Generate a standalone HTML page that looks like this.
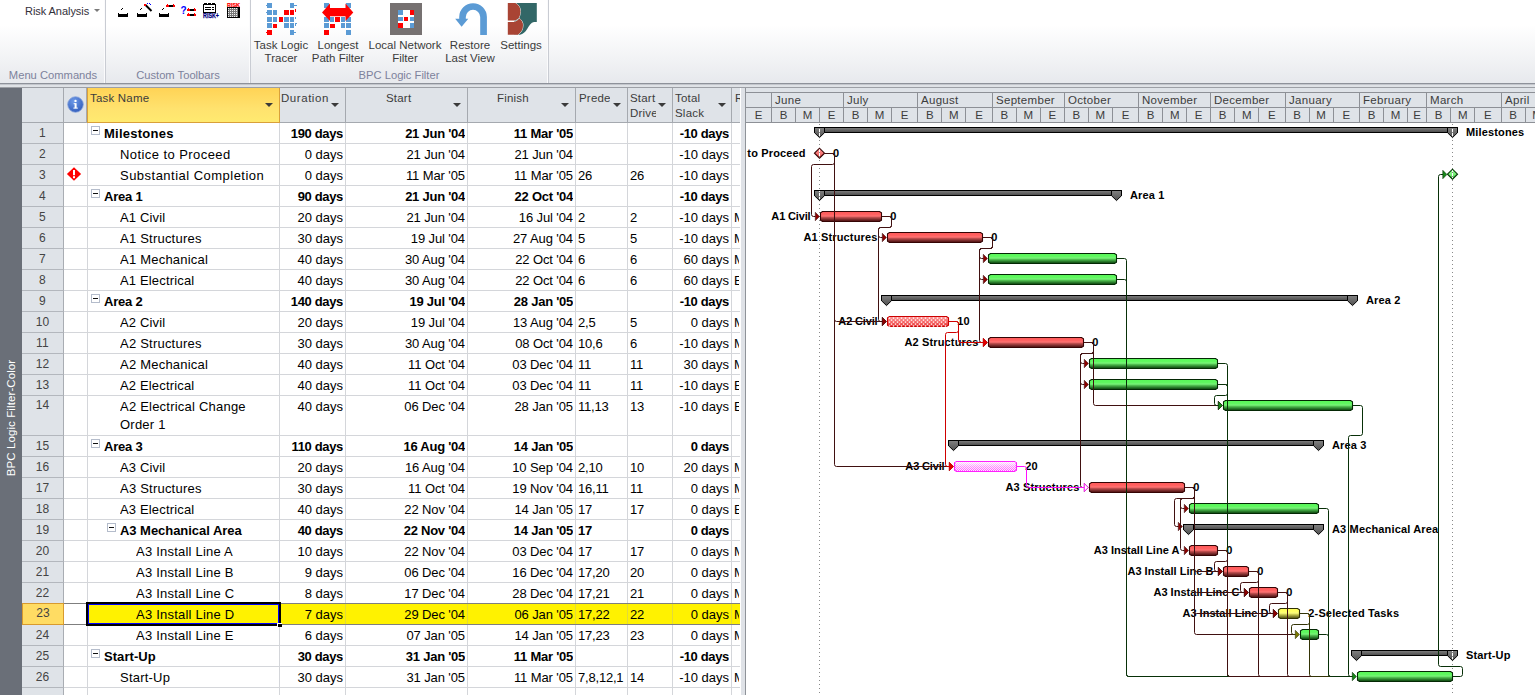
<!DOCTYPE html>
<html><head><meta charset="utf-8"><title>BPC Logic Filter</title>
<style>

html,body{margin:0;padding:0;}
body{width:1535px;height:695px;overflow:hidden;background:#fff;font-family:"Liberation Sans", sans-serif;position:relative;}
div,span{box-sizing:border-box;}
.abs{position:absolute;}
#ribbon{position:absolute;left:0;top:0;width:1535px;height:83px;background:linear-gradient(#ffffff 0%,#ffffff 30%,#f2f3f5 70%,#e7e9ed 100%);}
#ribbon .lbl{position:absolute;font-size:11.5px;color:#3b3b3b;text-align:center;line-height:13px;white-space:nowrap;transform:translateX(-50%);}
#ribbon .grp{position:absolute;font-size:11.2px;color:#7d829c;top:69px;line-height:13px;white-space:nowrap;transform:translateX(-50%);}
.rsep{position:absolute;top:0;width:2px;height:83px;background:linear-gradient(to right,#fbfbfc 0,#fbfbfc 1px,#c9ccd3 1px,#c9ccd3 2px);}
#band{position:absolute;left:0;top:83px;width:1535px;height:5px;background:linear-gradient(#c3c6cc 0,#c3c6cc 1px,#dfe2e6 1px);border-top:1px solid #8e929a;border-bottom:1px solid #9c9fa5;}
#side{position:absolute;left:0;top:88px;width:22px;height:607px;background:#6a6f78;}
#side span{position:absolute;left:11px;top:329.5px;color:#fff;font-size:11.5px;white-space:nowrap;transform:translate(-50%,-50%) rotate(-90deg);letter-spacing:0.1px;}
#tbl{position:absolute;left:22px;top:88px;width:718px;height:607px;background:#fff;overflow:hidden;}
.hc{position:absolute;top:0;height:35px;background:#dfe3e8;border-right:1px solid #a5a9af;border-bottom:1px solid #a5a9af;font-size:11.5px;letter-spacing:0.2px;color:#3c3c3c;line-height:17px;overflow:hidden;white-space:nowrap;}
.hc .t{position:absolute;top:2px;}
.dd{position:absolute;top:15px;width:0;height:0;border-left:4px solid transparent;border-right:4px solid transparent;border-top:4px solid #3a3a3a;}
.rn{position:absolute;left:0;width:42px;background:#dfe3e8;border-right:1px solid #a9adb3;border-bottom:1px solid #b3b7bd;font-size:12px;letter-spacing:0.2px;color:#444;text-align:center;}
.cell{position:absolute;font-size:13px;color:#000;white-space:nowrap;overflow:hidden;line-height:18px;}
.b{font-weight:bold;}
.hl{position:absolute;left:42px;height:1px;background:#d4d6da;width:676px;}
.vl{position:absolute;top:35px;width:1px;background:#d4d6da;height:572px;}
.ob{position:absolute;width:9px;height:9px;border:1px solid #b4bccb;background:#fff;}
.ob i{position:absolute;left:1px;top:3px;width:5px;height:1px;background:#111;}
#gantt{position:absolute;left:746px;top:88px;}

</style></head><body>
<div id="ribbon">
<span class="abs" style="left:25px;top:4px;font-size:11px;color:#33303a;line-height:14px;white-space:nowrap;letter-spacing:-0.05px">Risk Analysis</span>
<div class="abs" style="left:93.5px;top:9px;width:0;height:0;border-left:3px solid transparent;border-right:3px solid transparent;border-top:3.5px solid #7a7a7a"></div>
<div class="rsep" style="left:104px"></div>
<div class="rsep" style="left:249px"></div>
<div class="rsep" style="left:547px"></div>
<span class="grp" style="left:53px">Menu Commands</span>
<span class="grp" style="left:178px">Custom Toolbars</span>
<span class="grp" style="left:399px">BPC Logic Filter</span>
<span class="lbl" style="left:281px;top:39px">Task Logic<br>Tracer</span>
<span class="lbl" style="left:338px;top:39px">Longest<br>Path Filter</span>
<span class="lbl" style="left:405px;top:39px">Local Network<br>Filter</span>
<span class="lbl" style="left:470px;top:39px">Restore<br>Last View</span>
<span class="lbl" style="left:521px;top:39px">Settings<br></span>
<svg class="abs" style="left:0;top:0" width="560" height="42" viewBox="0 0 560 42" shape-rendering="crispEdges">
<rect x="118" y="14" width="10" height="3" fill="#000"/>
<rect x="118" y="13" width="1" height="1" fill="#000"/>
<rect x="127" y="13" width="1" height="1" fill="#000"/>
<rect x="121" y="9" width="1" height="1" fill="#000"/>
<rect x="122" y="8" width="1" height="1" fill="#000"/>
<rect x="137" y="14" width="10" height="3" fill="#000"/>
<rect x="137" y="13" width="1" height="1" fill="#000"/>
<rect x="146" y="13" width="1" height="1" fill="#000"/>
<rect x="140" y="9" width="1" height="1" fill="#000"/>
<rect x="141" y="8" width="1" height="1" fill="#000"/>
<rect x="159" y="14" width="10" height="3" fill="#000"/>
<rect x="159" y="13" width="1" height="1" fill="#000"/>
<rect x="168" y="13" width="1" height="1" fill="#000"/>
<rect x="162" y="9" width="1" height="1" fill="#000"/>
<rect x="163" y="8" width="1" height="1" fill="#000"/>
<path d="M145.5 5 L151.5 11" stroke="#000" stroke-width="2" shape-rendering="auto"/>
<rect x="144" y="4" width="2" height="1.5" fill="#ff0000"/>
<rect x="147" y="3" width="1" height="1" fill="#00f"/>
<rect x="149" y="3" width="1" height="1" fill="#00f"/>
<rect x="150" y="4" width="1" height="1" fill="#00f"/>
<rect x="166" y="5" width="9" height="2" fill="#000"/>
<rect x="166" y="5" width="2.5" height="2" fill="#ff0000"/>
<rect x="172.5" y="5" width="2.5" height="2" fill="#ff0000"/>
<rect x="167" y="4" width="1" height="1" fill="#ff0000"/>
<rect x="173" y="4" width="1" height="1" fill="#ff0000"/>
<text x="180.5" y="13.8" font-family='"Liberation Sans",sans-serif' font-size="10" font-weight="bold" fill="#0000ff" shape-rendering="auto">?</text>
<rect x="187" y="9" width="9" height="2" fill="#000"/>
<rect x="187" y="9" width="2.5" height="2" fill="#ff0000"/>
<rect x="193.5" y="9" width="2.5" height="2" fill="#ff0000"/>
<rect x="188" y="8" width="1" height="1" fill="#ff0000"/>
<rect x="194" y="8" width="1" height="1" fill="#ff0000"/>
<rect x="187" y="14" width="9" height="2" fill="#000"/>
<rect x="187" y="14" width="2.5" height="2" fill="#ff0000"/>
<rect x="193.5" y="14" width="2.5" height="2" fill="#ff0000"/>
<rect x="188" y="13" width="1" height="1" fill="#ff0000"/>
<rect x="194" y="13" width="1" height="1" fill="#ff0000"/>
<rect x="203.5" y="4.5" width="12" height="8" fill="#fff" stroke="#000" stroke-width="1"/>
<rect x="204" y="3" width="3" height="1" fill="#000"/>
<rect x="208" y="3" width="3" height="1" fill="#000"/>
<rect x="212" y="3" width="3" height="1" fill="#000"/>
<rect x="205" y="7" width="6" height="1" fill="#000"/>
<rect x="212" y="7" width="2" height="1" fill="#000"/>
<rect x="205" y="9" width="6" height="1" fill="#000"/>
<rect x="212" y="9" width="2" height="1" fill="#000"/>
<text x="203" y="18" font-family='"Liberation Sans",sans-serif' font-size="6.8" font-weight="bold" fill="#000080" stroke="#000080" stroke-width="0.25" shape-rendering="auto" textLength="16" lengthAdjust="spacingAndGlyphs">RISK+</text>
<text x="227" y="7" font-family='"Liberation Sans",sans-serif' font-size="6" font-weight="bold" fill="#ff0000" stroke="#ff0000" stroke-width="0.25" shape-rendering="auto" textLength="13" lengthAdjust="spacingAndGlyphs">RISK</text>
<rect x="227" y="7" width="13" height="11" fill="#000"/>
<rect x="228" y="8" width="10" height="9" fill="#7a7a7a"/>
<rect x="228" y="8" width="1" height="1" fill="#f4f4f4"/>
<rect x="228" y="10" width="1" height="1" fill="#f4f4f4"/>
<rect x="228" y="12" width="1" height="1" fill="#f4f4f4"/>
<rect x="228" y="14" width="1" height="1" fill="#f4f4f4"/>
<rect x="228" y="16" width="1" height="1" fill="#f4f4f4"/>
<rect x="230" y="8" width="1" height="1" fill="#f4f4f4"/>
<rect x="230" y="10" width="1" height="1" fill="#f4f4f4"/>
<rect x="230" y="12" width="1" height="1" fill="#f4f4f4"/>
<rect x="230" y="14" width="1" height="1" fill="#f4f4f4"/>
<rect x="230" y="16" width="1" height="1" fill="#f4f4f4"/>
<rect x="232" y="8" width="1" height="1" fill="#f4f4f4"/>
<rect x="232" y="10" width="1" height="1" fill="#f4f4f4"/>
<rect x="232" y="12" width="1" height="1" fill="#f4f4f4"/>
<rect x="232" y="14" width="1" height="1" fill="#f4f4f4"/>
<rect x="232" y="16" width="1" height="1" fill="#f4f4f4"/>
<rect x="234" y="8" width="1" height="1" fill="#f4f4f4"/>
<rect x="234" y="10" width="1" height="1" fill="#f4f4f4"/>
<rect x="234" y="12" width="1" height="1" fill="#f4f4f4"/>
<rect x="234" y="14" width="1" height="1" fill="#f4f4f4"/>
<rect x="234" y="16" width="1" height="1" fill="#f4f4f4"/>
<rect x="236" y="8" width="1" height="1" fill="#f4f4f4"/>
<rect x="236" y="10" width="1" height="1" fill="#f4f4f4"/>
<rect x="236" y="12" width="1" height="1" fill="#f4f4f4"/>
<rect x="236" y="14" width="1" height="1" fill="#f4f4f4"/>
<rect x="236" y="16" width="1" height="1" fill="#f4f4f4"/>
<rect x="266.8" y="3" width="5.2" height="4.8" fill="#5b9bd5"/>
<rect x="290.1" y="3" width="3.9" height="4.8" fill="#5b9bd5"/>
<rect x="266.8" y="10" width="5.2" height="4.8" fill="#5b9bd5"/>
<rect x="272.9" y="10" width="3.9" height="4.8" fill="#5b9bd5"/>
<rect x="284" y="10" width="4.7" height="4.8" fill="#ff0000"/>
<rect x="290.1" y="10" width="3.9" height="4.8" fill="#ff0000"/>
<rect x="266.8" y="17" width="5.2" height="4.8" fill="#5b9bd5"/>
<rect x="272.9" y="17" width="3.9" height="4.8" fill="#5b9bd5"/>
<rect x="279" y="17" width="3.9" height="4.8" fill="#ff0000"/>
<rect x="284" y="17" width="4.7" height="4.8" fill="#5b9bd5"/>
<rect x="290.1" y="17" width="3.9" height="4.8" fill="#5b9bd5"/>
<rect x="266.8" y="23.2" width="5.2" height="4.8" fill="#5b9bd5"/>
<rect x="284" y="23.2" width="4.7" height="4.8" fill="#5b9bd5"/>
<rect x="290.1" y="23.2" width="3.9" height="4.8" fill="#5b9bd5"/>
<rect x="266.8" y="30" width="5.2" height="4.8" fill="#ff0000"/>
<rect x="290.1" y="30" width="3.9" height="4.8" fill="#5b9bd5"/>
<rect x="272.6" y="23.6" width="4.4" height="4.2" fill="#ff0000"/>
<rect x="265.8" y="5" width="1.2" height="1" fill="#5b9bd5"/>
<rect x="294" y="5" width="2.8" height="1" fill="#5b9bd5"/>
<rect x="265.5" y="12" width="1.5" height="1" fill="#5b9bd5"/>
<rect x="265.8" y="32" width="1.2" height="1" fill="#ff0000"/>
<rect x="294" y="32" width="2" height="1" fill="#5b9bd5"/>
<rect x="295.5" y="8.5" width="1.2" height="0.8" fill="#ff0000"/>
<rect x="295.3" y="8.5" width="0.7" height="3" fill="#ff0000"/>
<rect x="295.5" y="16.5" width="1.2" height="0.8" fill="#5b9bd5"/>
<rect x="295.3" y="16.5" width="0.7" height="2.5" fill="#5b9bd5"/>
<rect x="295.5" y="23" width="1.2" height="0.8" fill="#5b9bd5"/>
<rect x="295.3" y="23" width="0.7" height="2.5" fill="#5b9bd5"/>
<rect x="324.2" y="3" width="4.7" height="4.8" fill="#5b9bd5"/>
<rect x="346.4" y="3" width="4.3" height="4.8" fill="#5b9bd5"/>
<rect x="324.2" y="17" width="4.7" height="4.8" fill="#5b9bd5"/>
<rect x="330.3" y="17" width="3.6" height="4.8" fill="#5b9bd5"/>
<rect x="335.3" y="17" width="4.7" height="4.8" fill="#ff0000"/>
<rect x="341" y="17" width="3.6" height="4.8" fill="#5b9bd5"/>
<rect x="346.4" y="17" width="4.3" height="4.8" fill="#5b9bd5"/>
<rect x="324.2" y="23.2" width="4.7" height="4.8" fill="#5b9bd5"/>
<rect x="341" y="23.2" width="3.6" height="4.8" fill="#5b9bd5"/>
<rect x="346.4" y="23.2" width="4.3" height="4.8" fill="#5b9bd5"/>
<rect x="324.2" y="30" width="4.7" height="4.8" fill="#ff0000"/>
<rect x="346.4" y="30" width="4.3" height="4.8" fill="#5b9bd5"/>
<rect x="330.3" y="24" width="4.2" height="4" fill="#ff0000"/>
<path d="M322 12.5 L330 3.5 L330 8 L345.5 8 L345.5 3.5 L353.3 12.5 L345.5 21 L345.5 16.3 L330 16.3 L330 21 Z" fill="#ff0000" shape-rendering="auto"/>
<rect x="390" y="3" width="32" height="32" fill="#767171"/>
<rect x="398" y="10" width="16" height="18" fill="#fff"/>
<rect x="398" y="10" width="4.5" height="4.7" fill="#5b9bd5"/>
<rect x="409.5" y="10" width="4.5" height="4.7" fill="#ff0000"/>
<rect x="398" y="16.5" width="4.5" height="4.7" fill="#5b9bd5"/>
<rect x="403.7" y="16.5" width="4.5" height="4.7" fill="#ff0000"/>
<rect x="409.5" y="16.5" width="4.5" height="4.7" fill="#5b9bd5"/>
<rect x="398" y="23" width="4.5" height="4.7" fill="#ff0000"/>
<rect x="409.5" y="23" width="4.5" height="4.7" fill="#5b9bd5"/>
<path d="M480.2 35 L480.2 17 A7.2 7.2 0 0 0 465.8 17 L465.8 18.8 L468.3 18.8 L461.6 26.8 L455.2 18.8 L459.2 18.8 L459.2 17 A13.85 13.85 0 0 1 486.9 17 L486.9 35 Z" fill="#5b9bd5" shape-rendering="auto"/>
<path d="M516.5 3 L536.8 3 L536.8 21.9 L534 22 C531 22.6 529 25.5 527 29.3 C525.3 32 523 34 520 34.8 L514 34.8 L514 3 Z" fill="#326767" shape-rendering="auto"/>
<path d="M507.8 3 L515.2 3 C518.8 4.5 520.6 8 520.4 11.5 C520.3 14 519.8 16 519 17.6 C517.8 19.4 516 20.4 513.8 20.6 L507.8 20.6 Z" fill="#a94434" stroke="#fff" stroke-width="0.9" paint-order="stroke" shape-rendering="auto"/>
<path d="M507.8 22 L513.8 22 C516.2 21.6 518 20.2 519.3 18.4 C521.6 20 523 22.5 523 25.3 C523 29.5 521 32.8 517.8 34.8 L507.8 34.8 Z" fill="#a94434" stroke="#fff" stroke-width="0.9" paint-order="stroke" shape-rendering="auto"/>
<rect x="506" y="2" width="1.8" height="34" fill="#fff" opacity="0"/>
</svg>
</div>
<div id="band"></div>
<div id="side"><span>BPC Logic Filter-Color</span></div>
<div id="tbl">
<div class="hc" style="left:0;width:42px"></div>
<div class="hc" style="left:42px;width:23px"><svg class="abs" style="left:2.6px;top:8.4px" width="17" height="17" viewBox="0 0 17 17"><defs><radialGradient id="ig" cx="0.4" cy="0.3" r="0.8"><stop offset="0" stop-color="#6f9be8"/><stop offset="1" stop-color="#2c57b8"/></radialGradient></defs><circle cx="8.5" cy="8.5" r="7.8" fill="url(#ig)" stroke="#8aa6dc" stroke-width="0.8"/><rect x="7.6" y="7.2" width="2" height="5" fill="#fff"/><rect x="6.6" y="7.2" width="2" height="1" fill="#fff"/><rect x="6.4" y="11.6" width="4.4" height="1" fill="#fff"/><circle cx="8.5" cy="4.9" r="1.2" fill="#fff"/></svg></div>
<div class="hc" style="left:65px;width:193px;background:linear-gradient(#ffd356,#ffe26e 60%,#ffea70);border:1px solid #d9a03a;border-top:none"><span class="t" style="left:2px">Task Name</span><div class="dd" style="left:177px"></div></div>
<div class="hc" style="left:258px;width:66px"><span class="t" style="left:1px;letter-spacing:0.55px">Duration</span><div class="dd" style="left:51px"></div></div>
<div class="hc" style="left:324px;width:122px"><span class="t" style="left:40px">Start</span><div class="dd" style="left:107px"></div></div>
<div class="hc" style="left:446px;width:108px"><span class="t" style="left:29px">Finish</span><div class="dd" style="left:93px"></div></div>
<div class="hc" style="left:554px;width:52px"><span class="t" style="left:3px;width:31px;overflow:hidden">Prede</span><div class="dd" style="left:37px"></div></div>
<div class="hc" style="left:606px;width:45px;line-height:15px"><span class="t" style="left:2px;top:3px;width:26px;overflow:hidden">Start<br>Drive</span><div class="dd" style="left:30px"></div></div>
<div class="hc" style="left:651px;width:59px;line-height:15px"><span class="t" style="left:2px;top:3px">Total<br>Slack</span><div class="dd" style="left:45px"></div></div>
<div class="hc" style="left:710px;width:8px;border-right:none"><span class="t" style="left:3px">R</span></div>
<div class="vl" style="left:65px"></div>
<div class="vl" style="left:257px"></div>
<div class="vl" style="left:323px"></div>
<div class="vl" style="left:445px"></div>
<div class="vl" style="left:553px"></div>
<div class="vl" style="left:605px"></div>
<div class="vl" style="left:650px"></div>
<div class="vl" style="left:709px"></div>
<div class="rn" style="top:35px;height:21px;line-height:20px">1</div>
<div class="hl" style="top:55px"></div>
<div class="ob" style="left:69px;top:38px"><i></i></div>
<div class="cell b" style="left:82px;top:37px;width:175px;letter-spacing:0.25px;line-height:18px;">Milestones</div>
<div class="cell b" style="left:259px;top:37px;width:62px;text-align:right;letter-spacing:-0.35px">190 days</div>
<div class="cell b" style="left:325px;top:37px;width:118px;text-align:right;letter-spacing:-0.25px">21 Jun '04</div>
<div class="cell b" style="left:447px;top:37px;width:104px;text-align:right;letter-spacing:-0.25px">11 Mar '05</div>
<div class="cell b" style="left:652px;top:37px;width:55px;text-align:right;letter-spacing:-0.35px">-10 days</div>
<div class="rn" style="top:56px;height:21px;line-height:20px">2</div>
<div class="hl" style="top:76px"></div>
<div class="cell" style="left:98px;top:58px;width:159px;letter-spacing:0.43px;line-height:18px;">Notice to Proceed</div>
<div class="cell" style="left:259px;top:58px;width:62px;text-align:right;letter-spacing:0px">0 days</div>
<div class="cell" style="left:325px;top:58px;width:118px;text-align:right;letter-spacing:-0.1px">21 Jun '04</div>
<div class="cell" style="left:447px;top:58px;width:104px;text-align:right;letter-spacing:-0.1px">21 Jun '04</div>
<div class="cell" style="left:652px;top:58px;width:55px;text-align:right;letter-spacing:0px">-10 days</div>
<div class="rn" style="top:77px;height:21px;line-height:20px">3</div>
<div class="hl" style="top:97px"></div>
<div class="cell" style="left:98px;top:79px;width:159px;letter-spacing:0.48px;line-height:18px;">Substantial Completion</div>
<div class="cell" style="left:259px;top:79px;width:62px;text-align:right;letter-spacing:0px">0 days</div>
<div class="cell" style="left:325px;top:79px;width:118px;text-align:right;letter-spacing:-0.1px">11 Mar '05</div>
<div class="cell" style="left:447px;top:79px;width:104px;text-align:right;letter-spacing:-0.1px">11 Mar '05</div>
<div class="cell" style="left:556px;top:79px;width:49px;letter-spacing:-0.2px">26</div>
<div class="cell" style="left:608px;top:79px;width:42px;letter-spacing:-0.2px">26</div>
<div class="cell" style="left:652px;top:79px;width:55px;text-align:right;letter-spacing:0px">-10 days</div>
<div class="rn" style="top:98px;height:21px;line-height:20px">4</div>
<div class="hl" style="top:118px"></div>
<div class="ob" style="left:69px;top:101px"><i></i></div>
<div class="cell b" style="left:82px;top:100px;width:175px;letter-spacing:-0.2px;line-height:18px;">Area 1</div>
<div class="cell b" style="left:259px;top:100px;width:62px;text-align:right;letter-spacing:-0.35px">90 days</div>
<div class="cell b" style="left:325px;top:100px;width:118px;text-align:right;letter-spacing:-0.25px">21 Jun '04</div>
<div class="cell b" style="left:447px;top:100px;width:104px;text-align:right;letter-spacing:-0.25px">22 Oct '04</div>
<div class="cell b" style="left:652px;top:100px;width:55px;text-align:right;letter-spacing:-0.35px">-10 days</div>
<div class="rn" style="top:119px;height:21px;line-height:20px">5</div>
<div class="hl" style="top:139px"></div>
<div class="cell" style="left:98px;top:121px;width:159px;letter-spacing:0.14px;line-height:18px;">A1 Civil</div>
<div class="cell" style="left:259px;top:121px;width:62px;text-align:right;letter-spacing:0px">20 days</div>
<div class="cell" style="left:325px;top:121px;width:118px;text-align:right;letter-spacing:-0.1px">21 Jun '04</div>
<div class="cell" style="left:447px;top:121px;width:104px;text-align:right;letter-spacing:-0.1px">16 Jul '04</div>
<div class="cell" style="left:556px;top:121px;width:49px;letter-spacing:-0.2px">2</div>
<div class="cell" style="left:608px;top:121px;width:42px;letter-spacing:-0.2px">2</div>
<div class="cell" style="left:652px;top:121px;width:55px;text-align:right;letter-spacing:0px">-10 days</div>
<div class="cell" style="left:712px;top:121px;width:5px">M</div>
<div class="rn" style="top:140px;height:21px;line-height:20px">6</div>
<div class="hl" style="top:160px"></div>
<div class="cell" style="left:98px;top:142px;width:159px;letter-spacing:0.22px;line-height:18px;">A1 Structures</div>
<div class="cell" style="left:259px;top:142px;width:62px;text-align:right;letter-spacing:0px">30 days</div>
<div class="cell" style="left:325px;top:142px;width:118px;text-align:right;letter-spacing:-0.1px">19 Jul '04</div>
<div class="cell" style="left:447px;top:142px;width:104px;text-align:right;letter-spacing:-0.1px">27 Aug '04</div>
<div class="cell" style="left:556px;top:142px;width:49px;letter-spacing:-0.2px">5</div>
<div class="cell" style="left:608px;top:142px;width:42px;letter-spacing:-0.2px">5</div>
<div class="cell" style="left:652px;top:142px;width:55px;text-align:right;letter-spacing:0px">-10 days</div>
<div class="cell" style="left:712px;top:142px;width:5px">M</div>
<div class="rn" style="top:161px;height:21px;line-height:20px">7</div>
<div class="hl" style="top:181px"></div>
<div class="cell" style="left:98px;top:163px;width:159px;letter-spacing:0.22px;line-height:18px;">A1 Mechanical</div>
<div class="cell" style="left:259px;top:163px;width:62px;text-align:right;letter-spacing:0px">40 days</div>
<div class="cell" style="left:325px;top:163px;width:118px;text-align:right;letter-spacing:-0.1px">30 Aug '04</div>
<div class="cell" style="left:447px;top:163px;width:104px;text-align:right;letter-spacing:-0.1px">22 Oct '04</div>
<div class="cell" style="left:556px;top:163px;width:49px;letter-spacing:-0.2px">6</div>
<div class="cell" style="left:608px;top:163px;width:42px;letter-spacing:-0.2px">6</div>
<div class="cell" style="left:652px;top:163px;width:55px;text-align:right;letter-spacing:0px">60 days</div>
<div class="cell" style="left:712px;top:163px;width:5px">M</div>
<div class="rn" style="top:182px;height:21px;line-height:20px">8</div>
<div class="hl" style="top:202px"></div>
<div class="cell" style="left:98px;top:184px;width:159px;letter-spacing:0.16px;line-height:18px;">A1 Electrical</div>
<div class="cell" style="left:259px;top:184px;width:62px;text-align:right;letter-spacing:0px">40 days</div>
<div class="cell" style="left:325px;top:184px;width:118px;text-align:right;letter-spacing:-0.1px">30 Aug '04</div>
<div class="cell" style="left:447px;top:184px;width:104px;text-align:right;letter-spacing:-0.1px">22 Oct '04</div>
<div class="cell" style="left:556px;top:184px;width:49px;letter-spacing:-0.2px">6</div>
<div class="cell" style="left:608px;top:184px;width:42px;letter-spacing:-0.2px">6</div>
<div class="cell" style="left:652px;top:184px;width:55px;text-align:right;letter-spacing:0px">60 days</div>
<div class="cell" style="left:712px;top:184px;width:5px">E</div>
<div class="rn" style="top:203px;height:21px;line-height:20px">9</div>
<div class="hl" style="top:223px"></div>
<div class="ob" style="left:69px;top:206px"><i></i></div>
<div class="cell b" style="left:82px;top:205px;width:175px;letter-spacing:-0.2px;line-height:18px;">Area 2</div>
<div class="cell b" style="left:259px;top:205px;width:62px;text-align:right;letter-spacing:-0.35px">140 days</div>
<div class="cell b" style="left:325px;top:205px;width:118px;text-align:right;letter-spacing:-0.25px">19 Jul '04</div>
<div class="cell b" style="left:447px;top:205px;width:104px;text-align:right;letter-spacing:-0.25px">28 Jan '05</div>
<div class="cell b" style="left:652px;top:205px;width:55px;text-align:right;letter-spacing:-0.35px">-10 days</div>
<div class="rn" style="top:224px;height:21px;line-height:20px">10</div>
<div class="hl" style="top:244px"></div>
<div class="cell" style="left:98px;top:226px;width:159px;letter-spacing:0.14px;line-height:18px;">A2 Civil</div>
<div class="cell" style="left:259px;top:226px;width:62px;text-align:right;letter-spacing:0px">20 days</div>
<div class="cell" style="left:325px;top:226px;width:118px;text-align:right;letter-spacing:-0.1px">19 Jul '04</div>
<div class="cell" style="left:447px;top:226px;width:104px;text-align:right;letter-spacing:-0.1px">13 Aug '04</div>
<div class="cell" style="left:556px;top:226px;width:49px;letter-spacing:-0.2px">2,5</div>
<div class="cell" style="left:608px;top:226px;width:42px;letter-spacing:-0.2px">5</div>
<div class="cell" style="left:652px;top:226px;width:55px;text-align:right;letter-spacing:0px">0 days</div>
<div class="cell" style="left:712px;top:226px;width:5px">M</div>
<div class="rn" style="top:245px;height:21px;line-height:20px">11</div>
<div class="hl" style="top:265px"></div>
<div class="cell" style="left:98px;top:247px;width:159px;letter-spacing:0.22px;line-height:18px;">A2 Structures</div>
<div class="cell" style="left:259px;top:247px;width:62px;text-align:right;letter-spacing:0px">30 days</div>
<div class="cell" style="left:325px;top:247px;width:118px;text-align:right;letter-spacing:-0.1px">30 Aug '04</div>
<div class="cell" style="left:447px;top:247px;width:104px;text-align:right;letter-spacing:-0.1px">08 Oct '04</div>
<div class="cell" style="left:556px;top:247px;width:49px;letter-spacing:-0.2px">10,6</div>
<div class="cell" style="left:608px;top:247px;width:42px;letter-spacing:-0.2px">6</div>
<div class="cell" style="left:652px;top:247px;width:55px;text-align:right;letter-spacing:0px">-10 days</div>
<div class="cell" style="left:712px;top:247px;width:5px">M</div>
<div class="rn" style="top:266px;height:21px;line-height:20px">12</div>
<div class="hl" style="top:286px"></div>
<div class="cell" style="left:98px;top:268px;width:159px;letter-spacing:0.22px;line-height:18px;">A2 Mechanical</div>
<div class="cell" style="left:259px;top:268px;width:62px;text-align:right;letter-spacing:0px">40 days</div>
<div class="cell" style="left:325px;top:268px;width:118px;text-align:right;letter-spacing:-0.1px">11 Oct '04</div>
<div class="cell" style="left:447px;top:268px;width:104px;text-align:right;letter-spacing:-0.1px">03 Dec '04</div>
<div class="cell" style="left:556px;top:268px;width:49px;letter-spacing:-0.2px">11</div>
<div class="cell" style="left:608px;top:268px;width:42px;letter-spacing:-0.2px">11</div>
<div class="cell" style="left:652px;top:268px;width:55px;text-align:right;letter-spacing:0px">30 days</div>
<div class="cell" style="left:712px;top:268px;width:5px">M</div>
<div class="rn" style="top:287px;height:21px;line-height:20px">13</div>
<div class="hl" style="top:307px"></div>
<div class="cell" style="left:98px;top:289px;width:159px;letter-spacing:0.16px;line-height:18px;">A2 Electrical</div>
<div class="cell" style="left:259px;top:289px;width:62px;text-align:right;letter-spacing:0px">40 days</div>
<div class="cell" style="left:325px;top:289px;width:118px;text-align:right;letter-spacing:-0.1px">11 Oct '04</div>
<div class="cell" style="left:447px;top:289px;width:104px;text-align:right;letter-spacing:-0.1px">03 Dec '04</div>
<div class="cell" style="left:556px;top:289px;width:49px;letter-spacing:-0.2px">11</div>
<div class="cell" style="left:608px;top:289px;width:42px;letter-spacing:-0.2px">11</div>
<div class="cell" style="left:652px;top:289px;width:55px;text-align:right;letter-spacing:0px">-10 days</div>
<div class="cell" style="left:712px;top:289px;width:5px">E</div>
<div class="rn" style="top:308px;height:40px;line-height:19px">14</div>
<div class="hl" style="top:347px"></div>
<div class="cell" style="left:98px;top:310px;width:159px;letter-spacing:0.22px;line-height:18px;white-space:normal;">A2 Electrical Change<br>Order 1</div>
<div class="cell" style="left:259px;top:310px;width:62px;text-align:right;letter-spacing:0px">40 days</div>
<div class="cell" style="left:325px;top:310px;width:118px;text-align:right;letter-spacing:-0.1px">06 Dec '04</div>
<div class="cell" style="left:447px;top:310px;width:104px;text-align:right;letter-spacing:-0.1px">28 Jan '05</div>
<div class="cell" style="left:556px;top:310px;width:49px;letter-spacing:-0.2px">11,13</div>
<div class="cell" style="left:608px;top:310px;width:42px;letter-spacing:-0.2px">13</div>
<div class="cell" style="left:652px;top:310px;width:55px;text-align:right;letter-spacing:0px">-10 days</div>
<div class="cell" style="left:712px;top:310px;width:5px">E</div>
<div class="rn" style="top:348px;height:21px;line-height:20px">15</div>
<div class="hl" style="top:368px"></div>
<div class="ob" style="left:69px;top:351px"><i></i></div>
<div class="cell b" style="left:82px;top:350px;width:175px;letter-spacing:-0.2px;line-height:18px;">Area 3</div>
<div class="cell b" style="left:259px;top:350px;width:62px;text-align:right;letter-spacing:-0.35px">110 days</div>
<div class="cell b" style="left:325px;top:350px;width:118px;text-align:right;letter-spacing:-0.25px">16 Aug '04</div>
<div class="cell b" style="left:447px;top:350px;width:104px;text-align:right;letter-spacing:-0.25px">14 Jan '05</div>
<div class="cell b" style="left:652px;top:350px;width:55px;text-align:right;letter-spacing:-0.35px">0 days</div>
<div class="rn" style="top:369px;height:21px;line-height:20px">16</div>
<div class="hl" style="top:389px"></div>
<div class="cell" style="left:98px;top:371px;width:159px;letter-spacing:0.14px;line-height:18px;">A3 Civil</div>
<div class="cell" style="left:259px;top:371px;width:62px;text-align:right;letter-spacing:0px">20 days</div>
<div class="cell" style="left:325px;top:371px;width:118px;text-align:right;letter-spacing:-0.1px">16 Aug '04</div>
<div class="cell" style="left:447px;top:371px;width:104px;text-align:right;letter-spacing:-0.1px">10 Sep '04</div>
<div class="cell" style="left:556px;top:371px;width:49px;letter-spacing:-0.2px">2,10</div>
<div class="cell" style="left:608px;top:371px;width:42px;letter-spacing:-0.2px">10</div>
<div class="cell" style="left:652px;top:371px;width:55px;text-align:right;letter-spacing:0px">20 days</div>
<div class="cell" style="left:712px;top:371px;width:5px">M</div>
<div class="rn" style="top:390px;height:21px;line-height:20px">17</div>
<div class="hl" style="top:410px"></div>
<div class="cell" style="left:98px;top:392px;width:159px;letter-spacing:0.22px;line-height:18px;">A3 Structures</div>
<div class="cell" style="left:259px;top:392px;width:62px;text-align:right;letter-spacing:0px">30 days</div>
<div class="cell" style="left:325px;top:392px;width:118px;text-align:right;letter-spacing:-0.1px">11 Oct '04</div>
<div class="cell" style="left:447px;top:392px;width:104px;text-align:right;letter-spacing:-0.1px">19 Nov '04</div>
<div class="cell" style="left:556px;top:392px;width:49px;letter-spacing:-0.2px">16,11</div>
<div class="cell" style="left:608px;top:392px;width:42px;letter-spacing:-0.2px">11</div>
<div class="cell" style="left:652px;top:392px;width:55px;text-align:right;letter-spacing:0px">0 days</div>
<div class="cell" style="left:712px;top:392px;width:5px">M</div>
<div class="rn" style="top:411px;height:21px;line-height:20px">18</div>
<div class="hl" style="top:431px"></div>
<div class="cell" style="left:98px;top:413px;width:159px;letter-spacing:0.16px;line-height:18px;">A3 Electrical</div>
<div class="cell" style="left:259px;top:413px;width:62px;text-align:right;letter-spacing:0px">40 days</div>
<div class="cell" style="left:325px;top:413px;width:118px;text-align:right;letter-spacing:-0.1px">22 Nov '04</div>
<div class="cell" style="left:447px;top:413px;width:104px;text-align:right;letter-spacing:-0.1px">14 Jan '05</div>
<div class="cell" style="left:556px;top:413px;width:49px;letter-spacing:-0.2px">17</div>
<div class="cell" style="left:608px;top:413px;width:42px;letter-spacing:-0.2px">17</div>
<div class="cell" style="left:652px;top:413px;width:55px;text-align:right;letter-spacing:0px">0 days</div>
<div class="cell" style="left:712px;top:413px;width:5px">E</div>
<div class="rn" style="top:432px;height:21px;line-height:20px">19</div>
<div class="hl" style="top:452px"></div>
<div class="ob" style="left:85px;top:435px"><i></i></div>
<div class="cell b" style="left:98px;top:434px;width:159px;letter-spacing:-0.04px;line-height:18px;">A3 Mechanical Area</div>
<div class="cell b" style="left:259px;top:434px;width:62px;text-align:right;letter-spacing:-0.35px">40 days</div>
<div class="cell b" style="left:325px;top:434px;width:118px;text-align:right;letter-spacing:-0.25px">22 Nov '04</div>
<div class="cell b" style="left:447px;top:434px;width:104px;text-align:right;letter-spacing:-0.25px">14 Jan '05</div>
<div class="cell b" style="left:556px;top:434px;width:49px;letter-spacing:-0.2px">17</div>
<div class="cell b" style="left:652px;top:434px;width:55px;text-align:right;letter-spacing:-0.35px">0 days</div>
<div class="rn" style="top:453px;height:21px;line-height:20px">20</div>
<div class="hl" style="top:473px"></div>
<div class="cell" style="left:114px;top:455px;width:143px;letter-spacing:0.22px;line-height:18px;">A3 Install Line A</div>
<div class="cell" style="left:259px;top:455px;width:62px;text-align:right;letter-spacing:0px">10 days</div>
<div class="cell" style="left:325px;top:455px;width:118px;text-align:right;letter-spacing:-0.1px">22 Nov '04</div>
<div class="cell" style="left:447px;top:455px;width:104px;text-align:right;letter-spacing:-0.1px">03 Dec '04</div>
<div class="cell" style="left:556px;top:455px;width:49px;letter-spacing:-0.2px">17</div>
<div class="cell" style="left:608px;top:455px;width:42px;letter-spacing:-0.2px">17</div>
<div class="cell" style="left:652px;top:455px;width:55px;text-align:right;letter-spacing:0px">0 days</div>
<div class="cell" style="left:712px;top:455px;width:5px">M</div>
<div class="rn" style="top:474px;height:21px;line-height:20px">21</div>
<div class="hl" style="top:494px"></div>
<div class="cell" style="left:114px;top:476px;width:143px;letter-spacing:0.22px;line-height:18px;">A3 Install Line B</div>
<div class="cell" style="left:259px;top:476px;width:62px;text-align:right;letter-spacing:0px">9 days</div>
<div class="cell" style="left:325px;top:476px;width:118px;text-align:right;letter-spacing:-0.1px">06 Dec '04</div>
<div class="cell" style="left:447px;top:476px;width:104px;text-align:right;letter-spacing:-0.1px">16 Dec '04</div>
<div class="cell" style="left:556px;top:476px;width:49px;letter-spacing:-0.2px">17,20</div>
<div class="cell" style="left:608px;top:476px;width:42px;letter-spacing:-0.2px">20</div>
<div class="cell" style="left:652px;top:476px;width:55px;text-align:right;letter-spacing:0px">0 days</div>
<div class="cell" style="left:712px;top:476px;width:5px">M</div>
<div class="rn" style="top:495px;height:21px;line-height:20px">22</div>
<div class="hl" style="top:515px"></div>
<div class="cell" style="left:114px;top:497px;width:143px;letter-spacing:0.22px;line-height:18px;">A3 Install Line C</div>
<div class="cell" style="left:259px;top:497px;width:62px;text-align:right;letter-spacing:0px">8 days</div>
<div class="cell" style="left:325px;top:497px;width:118px;text-align:right;letter-spacing:-0.1px">17 Dec '04</div>
<div class="cell" style="left:447px;top:497px;width:104px;text-align:right;letter-spacing:-0.1px">28 Dec '04</div>
<div class="cell" style="left:556px;top:497px;width:49px;letter-spacing:-0.2px">17,21</div>
<div class="cell" style="left:608px;top:497px;width:42px;letter-spacing:-0.2px">21</div>
<div class="cell" style="left:652px;top:497px;width:55px;text-align:right;letter-spacing:0px">0 days</div>
<div class="cell" style="left:712px;top:497px;width:5px">M</div>
<div class="rn" style="top:515px;height:22px;line-height:19px;background:#ffdc63;border:1px solid #d89a2e;width:42px">23</div>
<div class="hl" style="top:536px"></div>
<div class="abs" style="left:258px;top:516px;width:460px;height:20px;background:#fff200"></div>
<div class="abs" style="left:323px;top:516px;width:1px;height:20px;background:#e3da3a"></div>
<div class="abs" style="left:445px;top:516px;width:1px;height:20px;background:#e3da3a"></div>
<div class="abs" style="left:553px;top:516px;width:1px;height:20px;background:#e3da3a"></div>
<div class="abs" style="left:605px;top:516px;width:1px;height:20px;background:#e3da3a"></div>
<div class="abs" style="left:650px;top:516px;width:1px;height:20px;background:#e3da3a"></div>
<div class="abs" style="left:709px;top:516px;width:1px;height:20px;background:#e3da3a"></div>
<div class="abs" style="left:42px;top:515px;width:676px;height:1px;background:#7f7f7f"></div>
<div class="abs" style="left:42px;top:536px;width:676px;height:1px;background:#7f7f7f"></div>
<div class="abs" style="left:64px;top:514px;width:195px;height:24px;background:#fff200;border:2px solid #000;box-shadow:inset 0 0 0 1px #0000ff"></div>
<div class="abs" style="left:255px;top:535px;width:5px;height:4px;background:#000;border-top:1px solid #fff;border-left:1px solid #fff"></div>
<div class="cell" style="left:114px;top:518px;width:143px;letter-spacing:0.22px;line-height:18px;">A3 Install Line D</div>
<div class="cell" style="left:259px;top:518px;width:62px;text-align:right;letter-spacing:0px">7 days</div>
<div class="cell" style="left:325px;top:518px;width:118px;text-align:right;letter-spacing:-0.1px">29 Dec '04</div>
<div class="cell" style="left:447px;top:518px;width:104px;text-align:right;letter-spacing:-0.1px">06 Jan '05</div>
<div class="cell" style="left:556px;top:518px;width:49px;letter-spacing:-0.2px">17,22</div>
<div class="cell" style="left:608px;top:518px;width:42px;letter-spacing:-0.2px">22</div>
<div class="cell" style="left:652px;top:518px;width:55px;text-align:right;letter-spacing:0px">0 days</div>
<div class="cell" style="left:712px;top:518px;width:5px">M</div>
<div class="rn" style="top:537px;height:21px;line-height:20px">24</div>
<div class="hl" style="top:557px"></div>
<div class="cell" style="left:114px;top:539px;width:143px;letter-spacing:0.22px;line-height:18px;">A3 Install Line E</div>
<div class="cell" style="left:259px;top:539px;width:62px;text-align:right;letter-spacing:0px">6 days</div>
<div class="cell" style="left:325px;top:539px;width:118px;text-align:right;letter-spacing:-0.1px">07 Jan '05</div>
<div class="cell" style="left:447px;top:539px;width:104px;text-align:right;letter-spacing:-0.1px">14 Jan '05</div>
<div class="cell" style="left:556px;top:539px;width:49px;letter-spacing:-0.2px">17,23</div>
<div class="cell" style="left:608px;top:539px;width:42px;letter-spacing:-0.2px">23</div>
<div class="cell" style="left:652px;top:539px;width:55px;text-align:right;letter-spacing:0px">0 days</div>
<div class="cell" style="left:712px;top:539px;width:5px">M</div>
<div class="rn" style="top:558px;height:21px;line-height:20px">25</div>
<div class="hl" style="top:578px"></div>
<div class="ob" style="left:69px;top:561px"><i></i></div>
<div class="cell b" style="left:82px;top:560px;width:175px;letter-spacing:0.06px;line-height:18px;">Start-Up</div>
<div class="cell b" style="left:259px;top:560px;width:62px;text-align:right;letter-spacing:-0.35px">30 days</div>
<div class="cell b" style="left:325px;top:560px;width:118px;text-align:right;letter-spacing:-0.25px">31 Jan '05</div>
<div class="cell b" style="left:447px;top:560px;width:104px;text-align:right;letter-spacing:-0.25px">11 Mar '05</div>
<div class="cell b" style="left:652px;top:560px;width:55px;text-align:right;letter-spacing:-0.35px">-10 days</div>
<div class="rn" style="top:579px;height:21px;line-height:20px">26</div>
<div class="hl" style="top:599px"></div>
<div class="cell" style="left:98px;top:581px;width:159px;letter-spacing:0.22px;line-height:18px;">Start-Up</div>
<div class="cell" style="left:259px;top:581px;width:62px;text-align:right;letter-spacing:0px">30 days</div>
<div class="cell" style="left:325px;top:581px;width:118px;text-align:right;letter-spacing:-0.1px">31 Jan '05</div>
<div class="cell" style="left:447px;top:581px;width:104px;text-align:right;letter-spacing:-0.1px">11 Mar '05</div>
<div class="cell" style="left:556px;top:581px;width:49px;letter-spacing:-0.2px">7,8,12,1</div>
<div class="cell" style="left:608px;top:581px;width:42px;letter-spacing:-0.2px">14</div>
<div class="cell" style="left:652px;top:581px;width:55px;text-align:right;letter-spacing:0px">-10 days</div>
<div class="cell" style="left:712px;top:581px;width:5px">M</div>
<div class="rn" style="top:600px;height:21px"></div>
<svg class="abs" style="left:44px;top:77.5px" width="16" height="16" viewBox="0 0 16 16"><path d="M8 1.2 L15.1 8 L8 14.8 L0.9 8 Z" fill="#ff0000"/><rect x="7" y="4" width="2" height="5.2" fill="#fff"/><rect x="7" y="10.2" width="2" height="2" fill="#fff"/></svg>
</div>
<div class="abs" style="left:740px;top:88px;width:6px;height:607px;background:#dfe2e7;border-left:1px solid #fff;border-right:1px solid #8f9399"></div>
<svg id="gantt" width="789" height="607" viewBox="746 88 789 607" font-family='"Liberation Sans",sans-serif'>
<defs>
<linearGradient id="gRed" x1="0" y1="0" x2="0" y2="1"><stop offset="0" stop-color="#ff5858"/><stop offset="0.3" stop-color="#ff6262"/><stop offset="0.46" stop-color="#ff7272"/><stop offset="0.6" stop-color="#bc4c4c"/><stop offset="0.8" stop-color="#7a2c2c"/><stop offset="1" stop-color="#440a0a"/></linearGradient>
<linearGradient id="gGreen" x1="0" y1="0" x2="0" y2="1"><stop offset="0" stop-color="#58f858"/><stop offset="0.3" stop-color="#60f760"/><stop offset="0.46" stop-color="#78f478"/><stop offset="0.6" stop-color="#4ebc4e"/><stop offset="0.8" stop-color="#287a2a"/><stop offset="1" stop-color="#0a3a0a"/></linearGradient>
<linearGradient id="gYellow" x1="0" y1="0" x2="0" y2="1"><stop offset="0" stop-color="#ffff58"/><stop offset="0.3" stop-color="#ffff66"/><stop offset="0.46" stop-color="#fbfb7c"/><stop offset="0.6" stop-color="#c8c850"/><stop offset="0.8" stop-color="#84842e"/><stop offset="1" stop-color="#48480c"/></linearGradient>
<linearGradient id="gMsR" x1="0" y1="0" x2="0" y2="1"><stop offset="0" stop-color="#ff9090"/><stop offset="0.5" stop-color="#fa7a7a"/><stop offset="1" stop-color="#d04848"/></linearGradient>
<linearGradient id="gMsG" x1="0" y1="0" x2="0" y2="1"><stop offset="0" stop-color="#98ff98"/><stop offset="0.5" stop-color="#7af07a"/><stop offset="1" stop-color="#48c048"/></linearGradient>
<linearGradient id="gSum" x1="0" y1="0" x2="0" y2="1"><stop offset="0" stop-color="#808080"/><stop offset="1" stop-color="#4a4a4a"/></linearGradient>
<linearGradient id="gCap" x1="0" y1="0" x2="0" y2="1"><stop offset="0" stop-color="#828282"/><stop offset="1" stop-color="#505050"/></linearGradient>
<linearGradient id="gHR" x1="0" y1="0" x2="0" y2="1"><stop offset="0" stop-color="#ff9c9c"/><stop offset="0.5" stop-color="#f86a6a"/><stop offset="1" stop-color="#e63030"/></linearGradient>
<pattern id="hRed" width="4" height="4" patternUnits="userSpaceOnUse"><rect x="0.3" y="0.3" width="1.4" height="1.4" fill="#fff"/><rect x="2.3" y="2.3" width="1.4" height="1.4" fill="#fff"/></pattern>
<pattern id="hMag" width="2" height="2" patternUnits="userSpaceOnUse"><rect width="2" height="2" fill="#ffe6ff"/><rect width="1" height="1" fill="#ff5aff"/><rect x="1" y="1" width="1" height="1" fill="#ff5aff"/></pattern>
<linearGradient id="gHatchFade" x1="0" y1="0" x2="0" y2="1"><stop offset="0" stop-color="#fff" stop-opacity="0.85"/><stop offset="0.5" stop-color="#fff" stop-opacity="0.3"/><stop offset="1" stop-color="#fff" stop-opacity="0"/></linearGradient>
</defs>
<rect x="746" y="88" width="789" height="607" fill="#fff"/>
<rect x="746" y="88" width="789" height="35" fill="#dfe3e8"/>
<line x1="746" y1="92.5" x2="1535" y2="92.5" stroke="#8d9096" stroke-width="1"/>
<line x1="746" y1="107.5" x2="1535" y2="107.5" stroke="#8d9096" stroke-width="1"/>
<line x1="746" y1="122.5" x2="1535" y2="122.5" stroke="#8d9096" stroke-width="1"/>
<text x="758.5" y="118.5" font-size="11.5" fill="#3c3c3c" text-anchor="middle">E</text>
<line x1="771.5" y1="92" x2="771.5" y2="122" stroke="#8d9096" stroke-width="1"/>
<text x="775.0" y="104" font-size="11.5" fill="#3c3c3c" letter-spacing="0.3">June</text>
<text x="783.5" y="118.5" font-size="11.5" fill="#3c3c3c" text-anchor="middle">B</text>
<line x1="795.5" y1="107" x2="795.5" y2="122" stroke="#8d9096" stroke-width="1"/>
<text x="807.5" y="118.5" font-size="11.5" fill="#3c3c3c" text-anchor="middle">M</text>
<line x1="819.5" y1="107" x2="819.5" y2="122" stroke="#8d9096" stroke-width="1"/>
<text x="831.5" y="118.5" font-size="11.5" fill="#3c3c3c" text-anchor="middle">E</text>
<line x1="843.5" y1="92" x2="843.5" y2="122" stroke="#8d9096" stroke-width="1"/>
<text x="847.0" y="104" font-size="11.5" fill="#3c3c3c" letter-spacing="0.3">July</text>
<text x="855.5" y="118.5" font-size="11.5" fill="#3c3c3c" text-anchor="middle">B</text>
<line x1="867.5" y1="107" x2="867.5" y2="122" stroke="#8d9096" stroke-width="1"/>
<text x="879.5" y="118.5" font-size="11.5" fill="#3c3c3c" text-anchor="middle">M</text>
<line x1="891.5" y1="107" x2="891.5" y2="122" stroke="#8d9096" stroke-width="1"/>
<text x="904.7" y="118.5" font-size="11.5" fill="#3c3c3c" text-anchor="middle">E</text>
<line x1="917.5" y1="92" x2="917.5" y2="122" stroke="#8d9096" stroke-width="1"/>
<text x="921.0" y="104" font-size="11.5" fill="#3c3c3c" letter-spacing="0.3">August</text>
<text x="929.9" y="118.5" font-size="11.5" fill="#3c3c3c" text-anchor="middle">B</text>
<line x1="941.5" y1="107" x2="941.5" y2="122" stroke="#8d9096" stroke-width="1"/>
<text x="953.9" y="118.5" font-size="11.5" fill="#3c3c3c" text-anchor="middle">M</text>
<line x1="965.5" y1="107" x2="965.5" y2="122" stroke="#8d9096" stroke-width="1"/>
<text x="979.1" y="118.5" font-size="11.5" fill="#3c3c3c" text-anchor="middle">E</text>
<line x1="992.5" y1="92" x2="992.5" y2="122" stroke="#8d9096" stroke-width="1"/>
<text x="996.0" y="104" font-size="11.5" fill="#3c3c3c" letter-spacing="0.3">September</text>
<text x="1004.3" y="118.5" font-size="11.5" fill="#3c3c3c" text-anchor="middle">B</text>
<line x1="1016.5" y1="107" x2="1016.5" y2="122" stroke="#8d9096" stroke-width="1"/>
<text x="1028.3" y="118.5" font-size="11.5" fill="#3c3c3c" text-anchor="middle">M</text>
<line x1="1040.5" y1="107" x2="1040.5" y2="122" stroke="#8d9096" stroke-width="1"/>
<text x="1052.3" y="118.5" font-size="11.5" fill="#3c3c3c" text-anchor="middle">E</text>
<line x1="1064.5" y1="92" x2="1064.5" y2="122" stroke="#8d9096" stroke-width="1"/>
<text x="1068.0" y="104" font-size="11.5" fill="#3c3c3c" letter-spacing="0.3">October</text>
<text x="1076.3" y="118.5" font-size="11.5" fill="#3c3c3c" text-anchor="middle">B</text>
<line x1="1088.5" y1="107" x2="1088.5" y2="122" stroke="#8d9096" stroke-width="1"/>
<text x="1100.3" y="118.5" font-size="11.5" fill="#3c3c3c" text-anchor="middle">M</text>
<line x1="1112.5" y1="107" x2="1112.5" y2="122" stroke="#8d9096" stroke-width="1"/>
<text x="1125.5" y="118.5" font-size="11.5" fill="#3c3c3c" text-anchor="middle">E</text>
<line x1="1138.5" y1="92" x2="1138.5" y2="122" stroke="#8d9096" stroke-width="1"/>
<text x="1142.0" y="104" font-size="11.5" fill="#3c3c3c" letter-spacing="0.3">November</text>
<text x="1150.7" y="118.5" font-size="11.5" fill="#3c3c3c" text-anchor="middle">B</text>
<line x1="1162.5" y1="107" x2="1162.5" y2="122" stroke="#8d9096" stroke-width="1"/>
<text x="1174.7" y="118.5" font-size="11.5" fill="#3c3c3c" text-anchor="middle">M</text>
<line x1="1186.5" y1="107" x2="1186.5" y2="122" stroke="#8d9096" stroke-width="1"/>
<text x="1198.7" y="118.5" font-size="11.5" fill="#3c3c3c" text-anchor="middle">E</text>
<line x1="1210.5" y1="92" x2="1210.5" y2="122" stroke="#8d9096" stroke-width="1"/>
<text x="1214.0" y="104" font-size="11.5" fill="#3c3c3c" letter-spacing="0.3">December</text>
<text x="1222.7" y="118.5" font-size="11.5" fill="#3c3c3c" text-anchor="middle">B</text>
<line x1="1234.5" y1="107" x2="1234.5" y2="122" stroke="#8d9096" stroke-width="1"/>
<text x="1246.7" y="118.5" font-size="11.5" fill="#3c3c3c" text-anchor="middle">M</text>
<line x1="1258.5" y1="107" x2="1258.5" y2="122" stroke="#8d9096" stroke-width="1"/>
<text x="1271.9" y="118.5" font-size="11.5" fill="#3c3c3c" text-anchor="middle">E</text>
<line x1="1285.5" y1="92" x2="1285.5" y2="122" stroke="#8d9096" stroke-width="1"/>
<text x="1289.0" y="104" font-size="11.5" fill="#3c3c3c" letter-spacing="0.3">January</text>
<text x="1297.1" y="118.5" font-size="11.5" fill="#3c3c3c" text-anchor="middle">B</text>
<line x1="1309.5" y1="107" x2="1309.5" y2="122" stroke="#8d9096" stroke-width="1"/>
<text x="1321.1" y="118.5" font-size="11.5" fill="#3c3c3c" text-anchor="middle">M</text>
<line x1="1333.5" y1="107" x2="1333.5" y2="122" stroke="#8d9096" stroke-width="1"/>
<text x="1346.3" y="118.5" font-size="11.5" fill="#3c3c3c" text-anchor="middle">E</text>
<line x1="1359.5" y1="92" x2="1359.5" y2="122" stroke="#8d9096" stroke-width="1"/>
<text x="1363.0" y="104" font-size="11.5" fill="#3c3c3c" letter-spacing="0.3">February</text>
<text x="1371.5" y="118.5" font-size="11.5" fill="#3c3c3c" text-anchor="middle">B</text>
<line x1="1383.5" y1="107" x2="1383.5" y2="122" stroke="#8d9096" stroke-width="1"/>
<text x="1395.5" y="118.5" font-size="11.5" fill="#3c3c3c" text-anchor="middle">M</text>
<line x1="1407.5" y1="107" x2="1407.5" y2="122" stroke="#8d9096" stroke-width="1"/>
<text x="1417.1" y="118.5" font-size="11.5" fill="#3c3c3c" text-anchor="middle">E</text>
<line x1="1426.5" y1="92" x2="1426.5" y2="122" stroke="#8d9096" stroke-width="1"/>
<text x="1430.0" y="104" font-size="11.5" fill="#3c3c3c" letter-spacing="0.3">March</text>
<text x="1438.7" y="118.5" font-size="11.5" fill="#3c3c3c" text-anchor="middle">B</text>
<line x1="1450.5" y1="107" x2="1450.5" y2="122" stroke="#8d9096" stroke-width="1"/>
<text x="1462.7" y="118.5" font-size="11.5" fill="#3c3c3c" text-anchor="middle">M</text>
<line x1="1474.5" y1="107" x2="1474.5" y2="122" stroke="#8d9096" stroke-width="1"/>
<text x="1487.9" y="118.5" font-size="11.5" fill="#3c3c3c" text-anchor="middle">E</text>
<line x1="1501.5" y1="92" x2="1501.5" y2="122" stroke="#8d9096" stroke-width="1"/>
<text x="1505.0" y="104" font-size="11.5" fill="#3c3c3c" letter-spacing="0.3">April</text>
<text x="1513.1" y="118.5" font-size="11.5" fill="#3c3c3c" text-anchor="middle">B</text>
<line x1="1525.5" y1="107" x2="1525.5" y2="122" stroke="#8d9096" stroke-width="1"/>
<text x="1537.1" y="118.5" font-size="11.5" fill="#3c3c3c" text-anchor="middle">M</text>
<line x1="1549.5" y1="107" x2="1549.5" y2="122" stroke="#8d9096" stroke-width="1"/>
<text x="1561.1" y="118.5" font-size="11.5" fill="#3c3c3c" text-anchor="middle">E</text>
<line x1="819.5" y1="124" x2="819.5" y2="695" stroke="#8a8a8a" stroke-width="1" stroke-dasharray="1 3"/>
<line x1="1452.5" y1="124" x2="1452.5" y2="695" stroke="#8a8a8a" stroke-width="1" stroke-dasharray="1 3"/>
<rect x="814.5" y="127.5" width="643.0" height="5" fill="url(#gSum)" stroke="#000" stroke-width="1"/>
<path d="M814.5 127.5 L824.5 127.5 L824.5 132.7 L819.5 137.6 L814.5 132.7 Z" fill="url(#gCap)" stroke="#000" stroke-width="1" stroke-linejoin="miter"/>
<path d="M1447.5 127.5 L1457.5 127.5 L1457.5 132.7 L1452.5 137.6 L1447.5 132.7 Z" fill="url(#gCap)" stroke="#000" stroke-width="1" stroke-linejoin="miter"/>
<text x="1466" y="135.9" font-size="11" font-weight="bold" fill="#000" letter-spacing="0.15">Milestones</text>
<path d="M814.5 153.2 L819.5 148.2 L824.5 153.2 L819.5 158.2 Z" fill="url(#gMsR)" stroke="#3a0606" stroke-width="1.15"/>
<line x1="824.5" y1="153.5" x2="834" y2="153.5" stroke="#401010" stroke-width="1"/>
<text x="805.7" y="156.9" text-anchor="end" font-size="11" font-weight="bold" fill="#000" letter-spacing="0.15">Notice to Proceed</text>
<text x="833" y="156.9" font-size="11" font-weight="bold" fill="#000" letter-spacing="0.15">0</text>
<path d="M1447.5 174.2 L1452.5 169.2 L1457.5 174.2 L1452.5 179.2 Z" fill="url(#gMsG)" stroke="#063a06" stroke-width="1.15"/>
<rect x="814.5" y="190.5" width="307.0" height="5" fill="url(#gSum)" stroke="#000" stroke-width="1"/>
<path d="M814.5 190.5 L824.5 190.5 L824.5 195.7 L819.5 200.6 L814.5 195.7 Z" fill="url(#gCap)" stroke="#000" stroke-width="1" stroke-linejoin="miter"/>
<path d="M1111.5 190.5 L1121.5 190.5 L1121.5 195.7 L1116.5 200.6 L1111.5 195.7 Z" fill="url(#gCap)" stroke="#000" stroke-width="1" stroke-linejoin="miter"/>
<text x="1130" y="198.9" font-size="11" font-weight="bold" fill="#000" letter-spacing="0.15">Area 1</text>
<path d="M822.5 211.5 L879.5 211.5 L881.5 212.8 L881.5 220.2 L879.5 221.5 L822.5 221.5 L820.5 220.2 L820.5 212.8 Z" fill="url(#gRed)" stroke="#340404" stroke-width="1.1"/>
<text x="810.5" y="219.9" text-anchor="end" font-size="11" font-weight="bold" fill="#000" letter-spacing="-0.15">A1 Civil</text>
<text x="890.3" y="219.9" font-size="11" font-weight="bold" fill="#000" letter-spacing="0.15">0</text>
<path d="M889.5 232.5 L980.5 232.5 L982.5 233.8 L982.5 241.2 L980.5 242.5 L889.5 242.5 L887.5 241.2 L887.5 233.8 Z" fill="url(#gRed)" stroke="#340404" stroke-width="1.1"/>
<text x="877.5" y="240.9" text-anchor="end" font-size="11" font-weight="bold" fill="#000" letter-spacing="0.15">A1 Structures</text>
<text x="991.3" y="240.9" font-size="11" font-weight="bold" fill="#000" letter-spacing="0.15">0</text>
<path d="M990.5 253.5 L1114.5 253.5 L1116.5 254.8 L1116.5 262.2 L1114.5 263.5 L990.5 263.5 L988.5 262.2 L988.5 254.8 Z" fill="url(#gGreen)" stroke="#042804" stroke-width="1.1"/>
<path d="M990.5 274.5 L1114.5 274.5 L1116.5 275.8 L1116.5 283.2 L1114.5 284.5 L990.5 284.5 L988.5 283.2 L988.5 275.8 Z" fill="url(#gGreen)" stroke="#042804" stroke-width="1.1"/>
<rect x="881.5" y="295.5" width="476.0" height="5" fill="url(#gSum)" stroke="#000" stroke-width="1"/>
<path d="M881.5 295.5 L891.5 295.5 L891.5 300.7 L886.5 305.6 L881.5 300.7 Z" fill="url(#gCap)" stroke="#000" stroke-width="1" stroke-linejoin="miter"/>
<path d="M1347.5 295.5 L1357.5 295.5 L1357.5 300.7 L1352.5 305.6 L1347.5 300.7 Z" fill="url(#gCap)" stroke="#000" stroke-width="1" stroke-linejoin="miter"/>
<text x="1366" y="303.9" font-size="11" font-weight="bold" fill="#000" letter-spacing="0.15">Area 2</text>
<path d="M889.5 316.5 L946.5 316.5 L948.5 317.8 L948.5 325.2 L946.5 326.5 L889.5 326.5 L887.5 325.2 L887.5 317.8 Z" fill="url(#gHR)" stroke="#cc0000" stroke-width="1.1"/>
<rect x="888.8" y="317.4" width="1.4" height="1.4" fill="#fff" fill-opacity="0.95"/>
<rect x="890.8" y="319.4" width="1.4" height="1.4" fill="#fff" fill-opacity="0.95"/>
<rect x="888.8" y="321.4" width="1.4" height="1.4" fill="#fff" fill-opacity="0.95"/>
<rect x="890.8" y="323.4" width="1.4" height="1.4" fill="#fff" fill-opacity="0.95"/>
<rect x="888.8" y="325.3" width="1.4" height="1.4" fill="#fff" fill-opacity="0.95"/>
<rect x="892.8" y="317.4" width="1.4" height="1.4" fill="#fff" fill-opacity="0.95"/>
<rect x="894.8" y="319.4" width="1.4" height="1.4" fill="#fff" fill-opacity="0.95"/>
<rect x="892.8" y="321.4" width="1.4" height="1.4" fill="#fff" fill-opacity="0.95"/>
<rect x="894.8" y="323.4" width="1.4" height="1.4" fill="#fff" fill-opacity="0.95"/>
<rect x="892.8" y="325.3" width="1.4" height="1.4" fill="#fff" fill-opacity="0.95"/>
<rect x="896.8" y="317.4" width="1.4" height="1.4" fill="#fff" fill-opacity="0.95"/>
<rect x="898.8" y="319.4" width="1.4" height="1.4" fill="#fff" fill-opacity="0.95"/>
<rect x="896.8" y="321.4" width="1.4" height="1.4" fill="#fff" fill-opacity="0.95"/>
<rect x="898.8" y="323.4" width="1.4" height="1.4" fill="#fff" fill-opacity="0.95"/>
<rect x="896.8" y="325.3" width="1.4" height="1.4" fill="#fff" fill-opacity="0.95"/>
<rect x="900.8" y="317.4" width="1.4" height="1.4" fill="#fff" fill-opacity="0.95"/>
<rect x="902.8" y="319.4" width="1.4" height="1.4" fill="#fff" fill-opacity="0.95"/>
<rect x="900.8" y="321.4" width="1.4" height="1.4" fill="#fff" fill-opacity="0.95"/>
<rect x="902.8" y="323.4" width="1.4" height="1.4" fill="#fff" fill-opacity="0.95"/>
<rect x="900.8" y="325.3" width="1.4" height="1.4" fill="#fff" fill-opacity="0.95"/>
<rect x="904.8" y="317.4" width="1.4" height="1.4" fill="#fff" fill-opacity="0.95"/>
<rect x="906.8" y="319.4" width="1.4" height="1.4" fill="#fff" fill-opacity="0.95"/>
<rect x="904.8" y="321.4" width="1.4" height="1.4" fill="#fff" fill-opacity="0.95"/>
<rect x="906.8" y="323.4" width="1.4" height="1.4" fill="#fff" fill-opacity="0.95"/>
<rect x="904.8" y="325.3" width="1.4" height="1.4" fill="#fff" fill-opacity="0.95"/>
<rect x="908.8" y="317.4" width="1.4" height="1.4" fill="#fff" fill-opacity="0.95"/>
<rect x="910.8" y="319.4" width="1.4" height="1.4" fill="#fff" fill-opacity="0.95"/>
<rect x="908.8" y="321.4" width="1.4" height="1.4" fill="#fff" fill-opacity="0.95"/>
<rect x="910.8" y="323.4" width="1.4" height="1.4" fill="#fff" fill-opacity="0.95"/>
<rect x="908.8" y="325.3" width="1.4" height="1.4" fill="#fff" fill-opacity="0.95"/>
<rect x="912.8" y="317.4" width="1.4" height="1.4" fill="#fff" fill-opacity="0.95"/>
<rect x="914.8" y="319.4" width="1.4" height="1.4" fill="#fff" fill-opacity="0.95"/>
<rect x="912.8" y="321.4" width="1.4" height="1.4" fill="#fff" fill-opacity="0.95"/>
<rect x="914.8" y="323.4" width="1.4" height="1.4" fill="#fff" fill-opacity="0.95"/>
<rect x="912.8" y="325.3" width="1.4" height="1.4" fill="#fff" fill-opacity="0.95"/>
<rect x="916.8" y="317.4" width="1.4" height="1.4" fill="#fff" fill-opacity="0.95"/>
<rect x="918.8" y="319.4" width="1.4" height="1.4" fill="#fff" fill-opacity="0.95"/>
<rect x="916.8" y="321.4" width="1.4" height="1.4" fill="#fff" fill-opacity="0.95"/>
<rect x="918.8" y="323.4" width="1.4" height="1.4" fill="#fff" fill-opacity="0.95"/>
<rect x="916.8" y="325.3" width="1.4" height="1.4" fill="#fff" fill-opacity="0.95"/>
<rect x="920.8" y="317.4" width="1.4" height="1.4" fill="#fff" fill-opacity="0.95"/>
<rect x="922.8" y="319.4" width="1.4" height="1.4" fill="#fff" fill-opacity="0.95"/>
<rect x="920.8" y="321.4" width="1.4" height="1.4" fill="#fff" fill-opacity="0.95"/>
<rect x="922.8" y="323.4" width="1.4" height="1.4" fill="#fff" fill-opacity="0.95"/>
<rect x="920.8" y="325.3" width="1.4" height="1.4" fill="#fff" fill-opacity="0.95"/>
<rect x="924.8" y="317.4" width="1.4" height="1.4" fill="#fff" fill-opacity="0.95"/>
<rect x="926.8" y="319.4" width="1.4" height="1.4" fill="#fff" fill-opacity="0.95"/>
<rect x="924.8" y="321.4" width="1.4" height="1.4" fill="#fff" fill-opacity="0.95"/>
<rect x="926.8" y="323.4" width="1.4" height="1.4" fill="#fff" fill-opacity="0.95"/>
<rect x="924.8" y="325.3" width="1.4" height="1.4" fill="#fff" fill-opacity="0.95"/>
<rect x="928.8" y="317.4" width="1.4" height="1.4" fill="#fff" fill-opacity="0.95"/>
<rect x="930.8" y="319.4" width="1.4" height="1.4" fill="#fff" fill-opacity="0.95"/>
<rect x="928.8" y="321.4" width="1.4" height="1.4" fill="#fff" fill-opacity="0.95"/>
<rect x="930.8" y="323.4" width="1.4" height="1.4" fill="#fff" fill-opacity="0.95"/>
<rect x="928.8" y="325.3" width="1.4" height="1.4" fill="#fff" fill-opacity="0.95"/>
<rect x="932.8" y="317.4" width="1.4" height="1.4" fill="#fff" fill-opacity="0.95"/>
<rect x="934.8" y="319.4" width="1.4" height="1.4" fill="#fff" fill-opacity="0.95"/>
<rect x="932.8" y="321.4" width="1.4" height="1.4" fill="#fff" fill-opacity="0.95"/>
<rect x="934.8" y="323.4" width="1.4" height="1.4" fill="#fff" fill-opacity="0.95"/>
<rect x="932.8" y="325.3" width="1.4" height="1.4" fill="#fff" fill-opacity="0.95"/>
<rect x="936.8" y="317.4" width="1.4" height="1.4" fill="#fff" fill-opacity="0.95"/>
<rect x="938.8" y="319.4" width="1.4" height="1.4" fill="#fff" fill-opacity="0.95"/>
<rect x="936.8" y="321.4" width="1.4" height="1.4" fill="#fff" fill-opacity="0.95"/>
<rect x="938.8" y="323.4" width="1.4" height="1.4" fill="#fff" fill-opacity="0.95"/>
<rect x="936.8" y="325.3" width="1.4" height="1.4" fill="#fff" fill-opacity="0.95"/>
<rect x="940.8" y="317.4" width="1.4" height="1.4" fill="#fff" fill-opacity="0.95"/>
<rect x="942.8" y="319.4" width="1.4" height="1.4" fill="#fff" fill-opacity="0.95"/>
<rect x="940.8" y="321.4" width="1.4" height="1.4" fill="#fff" fill-opacity="0.95"/>
<rect x="942.8" y="323.4" width="1.4" height="1.4" fill="#fff" fill-opacity="0.95"/>
<rect x="940.8" y="325.3" width="1.4" height="1.4" fill="#fff" fill-opacity="0.95"/>
<rect x="944.8" y="317.4" width="1.4" height="1.4" fill="#fff" fill-opacity="0.95"/>
<rect x="944.8" y="321.4" width="1.4" height="1.4" fill="#fff" fill-opacity="0.95"/>
<rect x="944.8" y="325.3" width="1.4" height="1.4" fill="#fff" fill-opacity="0.95"/>
<text x="877.5" y="324.9" text-anchor="end" font-size="11" font-weight="bold" fill="#000" letter-spacing="-0.15">A2 Civil</text>
<text x="957.3" y="324.9" font-size="11" font-weight="bold" fill="#000" letter-spacing="0.15">10</text>
<path d="M990.5 337.5 L1081.5 337.5 L1083.5 338.8 L1083.5 346.2 L1081.5 347.5 L990.5 347.5 L988.5 346.2 L988.5 338.8 Z" fill="url(#gRed)" stroke="#340404" stroke-width="1.1"/>
<text x="978.5" y="345.9" text-anchor="end" font-size="11" font-weight="bold" fill="#000" letter-spacing="0.15">A2 Structures</text>
<text x="1092.3" y="345.9" font-size="11" font-weight="bold" fill="#000" letter-spacing="0.15">0</text>
<path d="M1091.5 358.5 L1215.5 358.5 L1217.5 359.8 L1217.5 367.2 L1215.5 368.5 L1091.5 368.5 L1089.5 367.2 L1089.5 359.8 Z" fill="url(#gGreen)" stroke="#042804" stroke-width="1.1"/>
<path d="M1091.5 379.5 L1215.5 379.5 L1217.5 380.8 L1217.5 388.2 L1215.5 389.5 L1091.5 389.5 L1089.5 388.2 L1089.5 380.8 Z" fill="url(#gGreen)" stroke="#042804" stroke-width="1.1"/>
<path d="M1225.5 400.5 L1350.5 400.5 L1352.5 401.8 L1352.5 409.2 L1350.5 410.5 L1225.5 410.5 L1223.5 409.2 L1223.5 401.8 Z" fill="url(#gGreen)" stroke="#042804" stroke-width="1.1"/>
<rect x="948.5" y="440.5" width="375.0" height="5" fill="url(#gSum)" stroke="#000" stroke-width="1"/>
<path d="M948.5 440.5 L958.5 440.5 L958.5 445.7 L953.5 450.6 L948.5 445.7 Z" fill="url(#gCap)" stroke="#000" stroke-width="1" stroke-linejoin="miter"/>
<path d="M1313.5 440.5 L1323.5 440.5 L1323.5 445.7 L1318.5 450.6 L1313.5 445.7 Z" fill="url(#gCap)" stroke="#000" stroke-width="1" stroke-linejoin="miter"/>
<text x="1332" y="448.9" font-size="11" font-weight="bold" fill="#000" letter-spacing="0.15">Area 3</text>
<path d="M956.5 461.5 L1014.5 461.5 L1016.5 462.8 L1016.5 470.2 L1014.5 471.5 L956.5 471.5 L954.5 470.2 L954.5 462.8 Z" fill="url(#hMag)" stroke="#ff20ff" stroke-width="1.1"/>
<rect x="955.5" y="462" width="60.0" height="9" fill="url(#gHatchFade)"/>
<text x="944.5" y="469.9" text-anchor="end" font-size="11" font-weight="bold" fill="#000" letter-spacing="-0.15">A3 Civil</text>
<text x="1025.3" y="469.9" font-size="11" font-weight="bold" fill="#000" letter-spacing="0.15">20</text>
<path d="M1091.5 482.5 L1182.5 482.5 L1184.5 483.8 L1184.5 491.2 L1182.5 492.5 L1091.5 492.5 L1089.5 491.2 L1089.5 483.8 Z" fill="url(#gRed)" stroke="#340404" stroke-width="1.1"/>
<text x="1079.5" y="490.9" text-anchor="end" font-size="11" font-weight="bold" fill="#000" letter-spacing="0.15">A3 Structures</text>
<text x="1193.3" y="490.9" font-size="11" font-weight="bold" fill="#000" letter-spacing="0.15">0</text>
<path d="M1191.5 503.5 L1316.5 503.5 L1318.5 504.8 L1318.5 512.2 L1316.5 513.5 L1191.5 513.5 L1189.5 512.2 L1189.5 504.8 Z" fill="url(#gGreen)" stroke="#042804" stroke-width="1.1"/>
<rect x="1183.5" y="524.5" width="140.0" height="5" fill="url(#gSum)" stroke="#000" stroke-width="1"/>
<path d="M1183.5 524.5 L1193.5 524.5 L1193.5 529.7 L1188.5 534.6 L1183.5 529.7 Z" fill="url(#gCap)" stroke="#000" stroke-width="1" stroke-linejoin="miter"/>
<path d="M1313.5 524.5 L1323.5 524.5 L1323.5 529.7 L1318.5 534.6 L1313.5 529.7 Z" fill="url(#gCap)" stroke="#000" stroke-width="1" stroke-linejoin="miter"/>
<text x="1332" y="532.9" font-size="11" font-weight="bold" fill="#000" letter-spacing="0.15">A3 Mechanical Area</text>
<path d="M1191.5 545.5 L1215.5 545.5 L1217.5 546.8 L1217.5 554.2 L1215.5 555.5 L1191.5 555.5 L1189.5 554.2 L1189.5 546.8 Z" fill="url(#gRed)" stroke="#340404" stroke-width="1.1"/>
<text x="1179.5" y="553.9" text-anchor="end" font-size="11" font-weight="bold" fill="#000" letter-spacing="0.03">A3 Install Line A</text>
<text x="1226.3" y="553.9" font-size="11" font-weight="bold" fill="#000" letter-spacing="0.15">0</text>
<path d="M1225.5 566.5 L1246.5 566.5 L1248.5 567.8 L1248.5 575.2 L1246.5 576.5 L1225.5 576.5 L1223.5 575.2 L1223.5 567.8 Z" fill="url(#gRed)" stroke="#340404" stroke-width="1.1"/>
<text x="1213.5" y="574.9" text-anchor="end" font-size="11" font-weight="bold" fill="#000" letter-spacing="0.03">A3 Install Line B</text>
<text x="1257.3" y="574.9" font-size="11" font-weight="bold" fill="#000" letter-spacing="0.15">0</text>
<path d="M1251.5 587.5 L1275.5 587.5 L1277.5 588.8 L1277.5 596.2 L1275.5 597.5 L1251.5 597.5 L1249.5 596.2 L1249.5 588.8 Z" fill="url(#gRed)" stroke="#340404" stroke-width="1.1"/>
<text x="1239.5" y="595.9" text-anchor="end" font-size="11" font-weight="bold" fill="#000" letter-spacing="0.03">A3 Install Line C</text>
<text x="1286.3" y="595.9" font-size="11" font-weight="bold" fill="#000" letter-spacing="0.15">0</text>
<path d="M1280.5 608.5 L1297.5 608.5 L1299.5 609.8 L1299.5 617.2 L1297.5 618.5 L1280.5 618.5 L1278.5 617.2 L1278.5 609.8 Z" fill="url(#gYellow)" stroke="#303004" stroke-width="1.1"/>
<text x="1268.5" y="616.9" text-anchor="end" font-size="11" font-weight="bold" fill="#000" letter-spacing="0.03">A3 Install Line D</text>
<text x="1308.3" y="616.9" font-size="11" font-weight="bold" fill="#000" letter-spacing="0.15">2-Selected Tasks</text>
<path d="M1302.5 629.5 L1316.5 629.5 L1318.5 630.8 L1318.5 638.2 L1316.5 639.5 L1302.5 639.5 L1300.5 638.2 L1300.5 630.8 Z" fill="url(#gGreen)" stroke="#042804" stroke-width="1.1"/>
<rect x="1351.5" y="650.5" width="106.0" height="5" fill="url(#gSum)" stroke="#000" stroke-width="1"/>
<path d="M1351.5 650.5 L1361.5 650.5 L1361.5 655.7 L1356.5 660.6 L1351.5 655.7 Z" fill="url(#gCap)" stroke="#000" stroke-width="1" stroke-linejoin="miter"/>
<path d="M1447.5 650.5 L1457.5 650.5 L1457.5 655.7 L1452.5 660.6 L1447.5 655.7 Z" fill="url(#gCap)" stroke="#000" stroke-width="1" stroke-linejoin="miter"/>
<text x="1466" y="658.9" font-size="11" font-weight="bold" fill="#000" letter-spacing="0.15">Start-Up</text>
<path d="M1359.5 671.5 L1450.5 671.5 L1452.5 672.8 L1452.5 680.2 L1450.5 681.5 L1359.5 681.5 L1357.5 680.2 L1357.5 672.8 Z" fill="url(#gGreen)" stroke="#042804" stroke-width="1.1"/>
<line x1="819.5" y1="128" x2="819.5" y2="136.2" stroke="#fff" stroke-width="1"/>
<line x1="819.5" y1="128" x2="819.5" y2="136.2" stroke="#8a8a8a" stroke-width="1" stroke-dasharray="1 3"/>
<line x1="819.5" y1="149.4" x2="819.5" y2="157.2" stroke="#fff" stroke-width="1"/>
<line x1="819.5" y1="152" x2="819.5" y2="157.2" stroke="#8a8a8a" stroke-width="1" stroke-dasharray="1 3"/>
<line x1="819.5" y1="191" x2="819.5" y2="199.2" stroke="#fff" stroke-width="1"/>
<line x1="819.5" y1="192" x2="819.5" y2="199.2" stroke="#8a8a8a" stroke-width="1" stroke-dasharray="1 3"/>
<line x1="1452.5" y1="128" x2="1452.5" y2="136.2" stroke="#fff" stroke-width="1"/>
<line x1="1452.5" y1="128" x2="1452.5" y2="136.2" stroke="#8a8a8a" stroke-width="1" stroke-dasharray="1 3"/>
<line x1="1452.5" y1="170.4" x2="1452.5" y2="178.2" stroke="#fff" stroke-width="1"/>
<line x1="1452.5" y1="172" x2="1452.5" y2="178.2" stroke="#8a8a8a" stroke-width="1" stroke-dasharray="1 3"/>
<line x1="1452.5" y1="651" x2="1452.5" y2="659.2" stroke="#fff" stroke-width="1"/>
<line x1="1452.5" y1="652" x2="1452.5" y2="659.2" stroke="#8a8a8a" stroke-width="1" stroke-dasharray="1 3"/>
<path d="M1453 676.5 L1460.40 676.50 Q1462.5 676.5 1462.50 674.40 L1462.50 668.60 Q1462.5 666.5 1460.40 666.50 L1440.60 666.50 Q1438.5 666.5 1438.50 664.40 L1438.50 176.60 Q1438.5 174.5 1440.60 174.50 L1443.1 174.5" fill="none" stroke="#083008" stroke-width="1"/>
<path d="M1442.8 170.3 L1446.8999999999999 174.5 L1442.8 178.7 Z" fill="#168a18" stroke="#083008" stroke-width="0.6" stroke-linejoin="miter"/>
<path d="M824.5 153.5 L832.40 153.50 Q834.5 153.5 834.50 155.60 L834.50 162.40 Q834.5 164.5 832.40 164.50 L813.60 164.50 Q811.5 164.5 811.50 166.60 L811.50 214.40 Q811.5 216.5 813.55 216.50 L815.6 216.5" fill="none" stroke="#401010" stroke-width="1"/>
<path d="M815.3000000000001 212.3 L819.4 216.5 L815.3000000000001 220.7 Z" fill="#8e0000" stroke="#401010" stroke-width="0.6" stroke-linejoin="miter"/>
<path d="M882 216.5 L889.40 216.50 Q891.5 216.5 891.50 218.60 L891.50 225.40 Q891.5 227.5 889.40 227.50 L880.60 227.50 Q878.5 227.5 878.50 229.60 L878.50 235.40 Q878.5 237.5 880.55 237.50 L882.6 237.5" fill="none" stroke="#401010" stroke-width="1"/>
<path d="M882.3000000000001 233.3 L886.4 237.5 L882.3000000000001 241.7 Z" fill="#8e0000" stroke="#401010" stroke-width="0.6" stroke-linejoin="miter"/>
<path d="M983 237.5 L990.40 237.50 Q992.5 237.5 992.50 239.60 L992.50 246.40 Q992.5 248.5 990.40 248.50 L981.60 248.50 Q979.5 248.5 979.50 250.60 L979.50 256.40 Q979.5 258.5 981.55 258.50 L983.6 258.5" fill="none" stroke="#401010" stroke-width="1"/>
<path d="M983.3000000000001 254.3 L987.4 258.5 L983.3000000000001 262.7 Z" fill="#8e0000" stroke="#401010" stroke-width="0.6" stroke-linejoin="miter"/>
<path d="M983 237.5 L990.40 237.50 Q992.5 237.5 992.50 239.60 L992.50 246.40 Q992.5 248.5 990.40 248.50 L981.60 248.50 Q979.5 248.5 979.50 250.60 L979.50 277.40 Q979.5 279.5 981.55 279.50 L983.6 279.5" fill="none" stroke="#401010" stroke-width="1"/>
<path d="M983.3000000000001 275.3 L987.4 279.5 L983.3000000000001 283.7 Z" fill="#8e0000" stroke="#401010" stroke-width="0.6" stroke-linejoin="miter"/>
<path d="M824.5 153.5 L832.40 153.50 Q834.5 153.5 834.50 155.60 L834.50 319.40 Q834.5 321.5 836.60 321.50 L882.6 321.5" fill="none" stroke="#401010" stroke-width="1"/>
<path d="M882.3000000000001 317.3 L886.4 321.5 L882.3000000000001 325.7 Z" fill="#8e0000" stroke="#401010" stroke-width="0.6" stroke-linejoin="miter"/>
<path d="M882 216.5 L889.40 216.50 Q891.5 216.5 891.50 218.60 L891.50 225.40 Q891.5 227.5 889.40 227.50 L880.60 227.50 Q878.5 227.5 878.50 229.60 L878.50 319.40 Q878.5 321.5 880.55 321.50 L882.6 321.5" fill="none" stroke="#401010" stroke-width="1"/>
<path d="M882.3000000000001 317.3 L886.4 321.5 L882.3000000000001 325.7 Z" fill="#8e0000" stroke="#401010" stroke-width="0.6" stroke-linejoin="miter"/>
<path d="M983 237.5 L990.40 237.50 Q992.5 237.5 992.50 239.60 L992.50 246.40 Q992.5 248.5 990.40 248.50 L981.60 248.50 Q979.5 248.5 979.50 250.60 L979.50 340.40 Q979.5 342.5 981.55 342.50 L983.6 342.5" fill="none" stroke="#401010" stroke-width="1"/>
<path d="M983.3000000000001 338.3 L987.4 342.5 L983.3000000000001 346.7 Z" fill="#8e0000" stroke="#401010" stroke-width="0.6" stroke-linejoin="miter"/>
<path d="M949 321.5 L956.40 321.50 Q958.5 321.5 958.50 323.60 L958.50 340.40 Q958.5 342.5 960.60 342.50 L983.6 342.5" fill="none" stroke="#d00000" stroke-width="1"/>
<path d="M983.3000000000001 338.3 L987.4 342.5 L983.3000000000001 346.7 Z" fill="#e00000" stroke="#e00000" stroke-width="0.6" stroke-linejoin="miter"/>
<path d="M1084 342.5 L1091.40 342.50 Q1093.5 342.5 1093.50 344.60 L1093.50 351.40 Q1093.5 353.5 1091.40 353.50 L1082.60 353.50 Q1080.5 353.5 1080.50 355.60 L1080.50 361.40 Q1080.5 363.5 1082.55 363.50 L1084.6 363.5" fill="none" stroke="#401010" stroke-width="1"/>
<path d="M1084.3 359.3 L1088.3999999999999 363.5 L1084.3 367.7 Z" fill="#8e0000" stroke="#401010" stroke-width="0.6" stroke-linejoin="miter"/>
<path d="M1084 342.5 L1091.40 342.50 Q1093.5 342.5 1093.50 344.60 L1093.50 351.40 Q1093.5 353.5 1091.40 353.50 L1082.60 353.50 Q1080.5 353.5 1080.50 355.60 L1080.50 382.40 Q1080.5 384.5 1082.55 384.50 L1084.6 384.5" fill="none" stroke="#401010" stroke-width="1"/>
<path d="M1084.3 380.3 L1088.3999999999999 384.5 L1084.3 388.7 Z" fill="#8e0000" stroke="#401010" stroke-width="0.6" stroke-linejoin="miter"/>
<path d="M1084 342.5 L1091.40 342.50 Q1093.5 342.5 1093.50 344.60 L1093.50 403.40 Q1093.5 405.5 1095.60 405.50 L1218.6 405.5" fill="none" stroke="#401010" stroke-width="1"/>
<path d="M1218.3 401.3 L1222.3999999999999 405.5 L1218.3 409.7 Z" fill="#8e0000" stroke="#401010" stroke-width="0.6" stroke-linejoin="miter"/>
<path d="M1218 384.5 L1225.40 384.50 Q1227.5 384.5 1227.50 386.60 L1227.50 393.40 Q1227.5 395.5 1225.40 395.50 L1216.60 395.50 Q1214.5 395.5 1214.50 397.60 L1214.50 403.40 Q1214.5 405.5 1216.55 405.50 L1218.6 405.5" fill="none" stroke="#083008" stroke-width="1"/>
<path d="M1218.3 401.3 L1222.3999999999999 405.5 L1218.3 409.7 Z" fill="#168a18" stroke="#083008" stroke-width="0.6" stroke-linejoin="miter"/>
<path d="M824.5 153.5 L832.40 153.50 Q834.5 153.5 834.50 155.60 L834.50 464.40 Q834.5 466.5 836.60 466.50 L949.6 466.5" fill="none" stroke="#401010" stroke-width="1"/>
<path d="M949.3000000000001 462.3 L953.4 466.5 L949.3000000000001 470.7 Z" fill="#8e0000" stroke="#401010" stroke-width="0.6" stroke-linejoin="miter"/>
<path d="M949 321.5 L956.40 321.50 Q958.5 321.5 958.50 323.60 L958.50 330.40 Q958.5 332.5 956.40 332.50 L947.60 332.50 Q945.5 332.5 945.50 334.60 L945.50 464.40 Q945.5 466.5 947.55 466.50 L949.6 466.5" fill="none" stroke="#d00000" stroke-width="1"/>
<path d="M949.3000000000001 462.3 L953.4 466.5 L949.3000000000001 470.7 Z" fill="#e00000" stroke="#e00000" stroke-width="0.6" stroke-linejoin="miter"/>
<path d="M1084 342.5 L1091.40 342.50 Q1093.5 342.5 1093.50 344.60 L1093.50 351.40 Q1093.5 353.5 1091.40 353.50 L1082.60 353.50 Q1080.5 353.5 1080.50 355.60 L1080.50 485.40 Q1080.5 487.5 1082.55 487.50 L1084.6 487.5" fill="none" stroke="#401010" stroke-width="1"/>
<path d="M1084.3 483.3 L1088.3999999999999 487.5 L1084.3 491.7 Z" fill="#8e0000" stroke="#401010" stroke-width="0.6" stroke-linejoin="miter"/>
<path d="M1017 466.5 L1024.40 466.50 Q1026.5 466.5 1026.50 468.60 L1026.50 485.40 Q1026.5 487.5 1028.60 487.50 L1084.6 487.5" fill="none" stroke="#ff10ff" stroke-width="1"/>
<path d="M1084.3 483.5 L1088.1999999999998 487.5 L1084.3 491.5 Z" fill="#fff" stroke="#ff30ff" stroke-width="1"/>
<path d="M1185 487.5 L1192.40 487.50 Q1194.5 487.5 1194.50 489.60 L1194.50 496.40 Q1194.5 498.5 1192.40 498.50 L1182.60 498.50 Q1180.5 498.5 1180.50 500.60 L1180.50 506.40 Q1180.5 508.5 1182.55 508.50 L1184.6 508.5" fill="none" stroke="#401010" stroke-width="1"/>
<path d="M1184.3 504.3 L1188.3999999999999 508.5 L1184.3 512.7 Z" fill="#8e0000" stroke="#401010" stroke-width="0.6" stroke-linejoin="miter"/>
<path d="M1185 487.5 L1192.40 487.50 Q1194.5 487.5 1194.50 489.60 L1194.50 496.40 Q1194.5 498.5 1192.40 498.50 L1176.60 498.50 Q1174.5 498.5 1174.50 500.60 L1174.50 524.40 Q1174.5 526.5 1176.55 526.50 L1178.6 526.5" fill="none" stroke="#401010" stroke-width="1"/>
<path d="M1178.3 522.3 L1182.3999999999999 526.5 L1178.3 530.7 Z" fill="#8e0000" stroke="#401010" stroke-width="0.6" stroke-linejoin="miter"/>
<path d="M1185 487.5 L1192.40 487.50 Q1194.5 487.5 1194.50 489.60 L1194.50 496.40 Q1194.5 498.5 1192.40 498.50 L1182.60 498.50 Q1180.5 498.5 1180.50 500.60 L1180.50 548.40 Q1180.5 550.5 1182.55 550.50 L1184.6 550.5" fill="none" stroke="#401010" stroke-width="1"/>
<path d="M1184.3 546.3 L1188.3999999999999 550.5 L1184.3 554.7 Z" fill="#8e0000" stroke="#401010" stroke-width="0.6" stroke-linejoin="miter"/>
<path d="M1185 487.5 L1192.40 487.50 Q1194.5 487.5 1194.50 489.60 L1194.50 569.40 Q1194.5 571.5 1196.60 571.50 L1218.6 571.5" fill="none" stroke="#401010" stroke-width="1"/>
<path d="M1218.3 567.3 L1222.3999999999999 571.5 L1218.3 575.7 Z" fill="#8e0000" stroke="#401010" stroke-width="0.6" stroke-linejoin="miter"/>
<path d="M1218 550.5 L1225.40 550.50 Q1227.5 550.5 1227.50 552.60 L1227.50 559.40 Q1227.5 561.5 1225.40 561.50 L1216.60 561.50 Q1214.5 561.5 1214.50 563.60 L1214.50 569.40 Q1214.5 571.5 1216.55 571.50 L1218.6 571.5" fill="none" stroke="#401010" stroke-width="1"/>
<path d="M1218.3 567.3 L1222.3999999999999 571.5 L1218.3 575.7 Z" fill="#8e0000" stroke="#401010" stroke-width="0.6" stroke-linejoin="miter"/>
<path d="M1185 487.5 L1192.40 487.50 Q1194.5 487.5 1194.50 489.60 L1194.50 590.40 Q1194.5 592.5 1196.60 592.50 L1244.6 592.5" fill="none" stroke="#401010" stroke-width="1"/>
<path d="M1244.3 588.3 L1248.3999999999999 592.5 L1244.3 596.7 Z" fill="#8e0000" stroke="#401010" stroke-width="0.6" stroke-linejoin="miter"/>
<path d="M1249 571.5 L1256.40 571.50 Q1258.5 571.5 1258.50 573.60 L1258.50 580.40 Q1258.5 582.5 1256.40 582.50 L1242.60 582.50 Q1240.5 582.5 1240.50 584.60 L1240.50 590.40 Q1240.5 592.5 1242.55 592.50 L1244.6 592.5" fill="none" stroke="#401010" stroke-width="1"/>
<path d="M1244.3 588.3 L1248.3999999999999 592.5 L1244.3 596.7 Z" fill="#8e0000" stroke="#401010" stroke-width="0.6" stroke-linejoin="miter"/>
<path d="M1185 487.5 L1192.40 487.50 Q1194.5 487.5 1194.50 489.60 L1194.50 611.40 Q1194.5 613.5 1196.60 613.50 L1273.6 613.5" fill="none" stroke="#401010" stroke-width="1"/>
<path d="M1273.3 609.3 L1277.3999999999999 613.5 L1273.3 617.7 Z" fill="#8e0000" stroke="#401010" stroke-width="0.6" stroke-linejoin="miter"/>
<path d="M1278 592.5 L1285.40 592.50 Q1287.5 592.5 1287.50 594.60 L1287.50 601.40 Q1287.5 603.5 1285.40 603.50 L1271.60 603.50 Q1269.5 603.5 1269.50 605.60 L1269.50 611.40 Q1269.5 613.5 1271.55 613.50 L1273.6 613.5" fill="none" stroke="#401010" stroke-width="1"/>
<path d="M1273.3 609.3 L1277.3999999999999 613.5 L1273.3 617.7 Z" fill="#8e0000" stroke="#401010" stroke-width="0.6" stroke-linejoin="miter"/>
<path d="M1185 487.5 L1192.40 487.50 Q1194.5 487.5 1194.50 489.60 L1194.50 632.40 Q1194.5 634.5 1196.60 634.50 L1295.6 634.5" fill="none" stroke="#401010" stroke-width="1"/>
<path d="M1300 613.5 L1307.40 613.50 Q1309.5 613.5 1309.50 615.60 L1309.50 622.40 Q1309.5 624.5 1307.40 624.50 L1293.60 624.50 Q1291.5 624.5 1291.50 626.60 L1291.50 632.40 Q1291.5 634.5 1293.55 634.50 L1295.6 634.5" fill="none" stroke="#343406" stroke-width="1"/>
<path d="M1295.3 630.3 L1299.3999999999999 634.5 L1295.3 638.7 Z" fill="#7a7a00" stroke="#343406" stroke-width="0.6" stroke-linejoin="miter"/>
<path d="M1117 258.5 L1124.40 258.50 Q1126.5 258.5 1126.50 260.60 L1126.50 674.40 Q1126.5 676.5 1128.60 676.50 L1352.6 676.5" fill="none" stroke="#083008" stroke-width="1"/>
<path d="M1117 279.5 L1124.40 279.50 Q1126.5 279.5 1126.50 281.60 L1126.50 674.40 Q1126.5 676.5 1128.60 676.50 L1352.6 676.5" fill="none" stroke="#083008" stroke-width="1"/>
<path d="M1218 363.5 L1225.40 363.50 Q1227.5 363.5 1227.50 365.60 L1227.50 674.40 Q1227.5 676.5 1229.60 676.50 L1352.6 676.5" fill="none" stroke="#083008" stroke-width="1"/>
<path d="M1218 384.5 L1225.40 384.50 Q1227.5 384.5 1227.50 386.60 L1227.50 674.40 Q1227.5 676.5 1229.60 676.50 L1352.6 676.5" fill="none" stroke="#083008" stroke-width="1"/>
<path d="M1319 508.5 L1326.40 508.50 Q1328.5 508.5 1328.50 510.60 L1328.50 674.40 Q1328.5 676.5 1330.60 676.50 L1352.6 676.5" fill="none" stroke="#083008" stroke-width="1"/>
<path d="M1218 550.5 L1225.40 550.50 Q1227.5 550.5 1227.50 552.60 L1227.50 674.40 Q1227.5 676.5 1229.60 676.50 L1352.6 676.5" fill="none" stroke="#401010" stroke-width="1"/>
<path d="M1249 571.5 L1256.40 571.50 Q1258.5 571.5 1258.50 573.60 L1258.50 674.40 Q1258.5 676.5 1260.60 676.50 L1352.6 676.5" fill="none" stroke="#401010" stroke-width="1"/>
<path d="M1278 592.5 L1285.40 592.50 Q1287.5 592.5 1287.50 594.60 L1287.50 674.40 Q1287.5 676.5 1289.60 676.50 L1352.6 676.5" fill="none" stroke="#401010" stroke-width="1"/>
<path d="M1300 613.5 L1307.40 613.50 Q1309.5 613.5 1309.50 615.60 L1309.50 674.40 Q1309.5 676.5 1311.60 676.50 L1352.6 676.5" fill="none" stroke="#343406" stroke-width="1"/>
<path d="M1319 634.5 L1326.40 634.50 Q1328.5 634.5 1328.50 636.60 L1328.50 674.40 Q1328.5 676.5 1330.60 676.50 L1352.6 676.5" fill="none" stroke="#083008" stroke-width="1"/>
<path d="M1353 405.5 L1360.40 405.50 Q1362.5 405.5 1362.50 407.60 L1362.50 433.40 Q1362.5 435.5 1360.40 435.50 L1350.60 435.50 Q1348.5 435.5 1348.50 437.60 L1348.50 674.40 Q1348.5 676.5 1350.55 676.50 L1352.6 676.5" fill="none" stroke="#083008" stroke-width="1"/>
<path d="M1352.3 672.3 L1356.3999999999999 676.5 L1352.3 680.7 Z" fill="#168a18" stroke="#083008" stroke-width="0.6" stroke-linejoin="miter"/>
</svg>
</body></html>
